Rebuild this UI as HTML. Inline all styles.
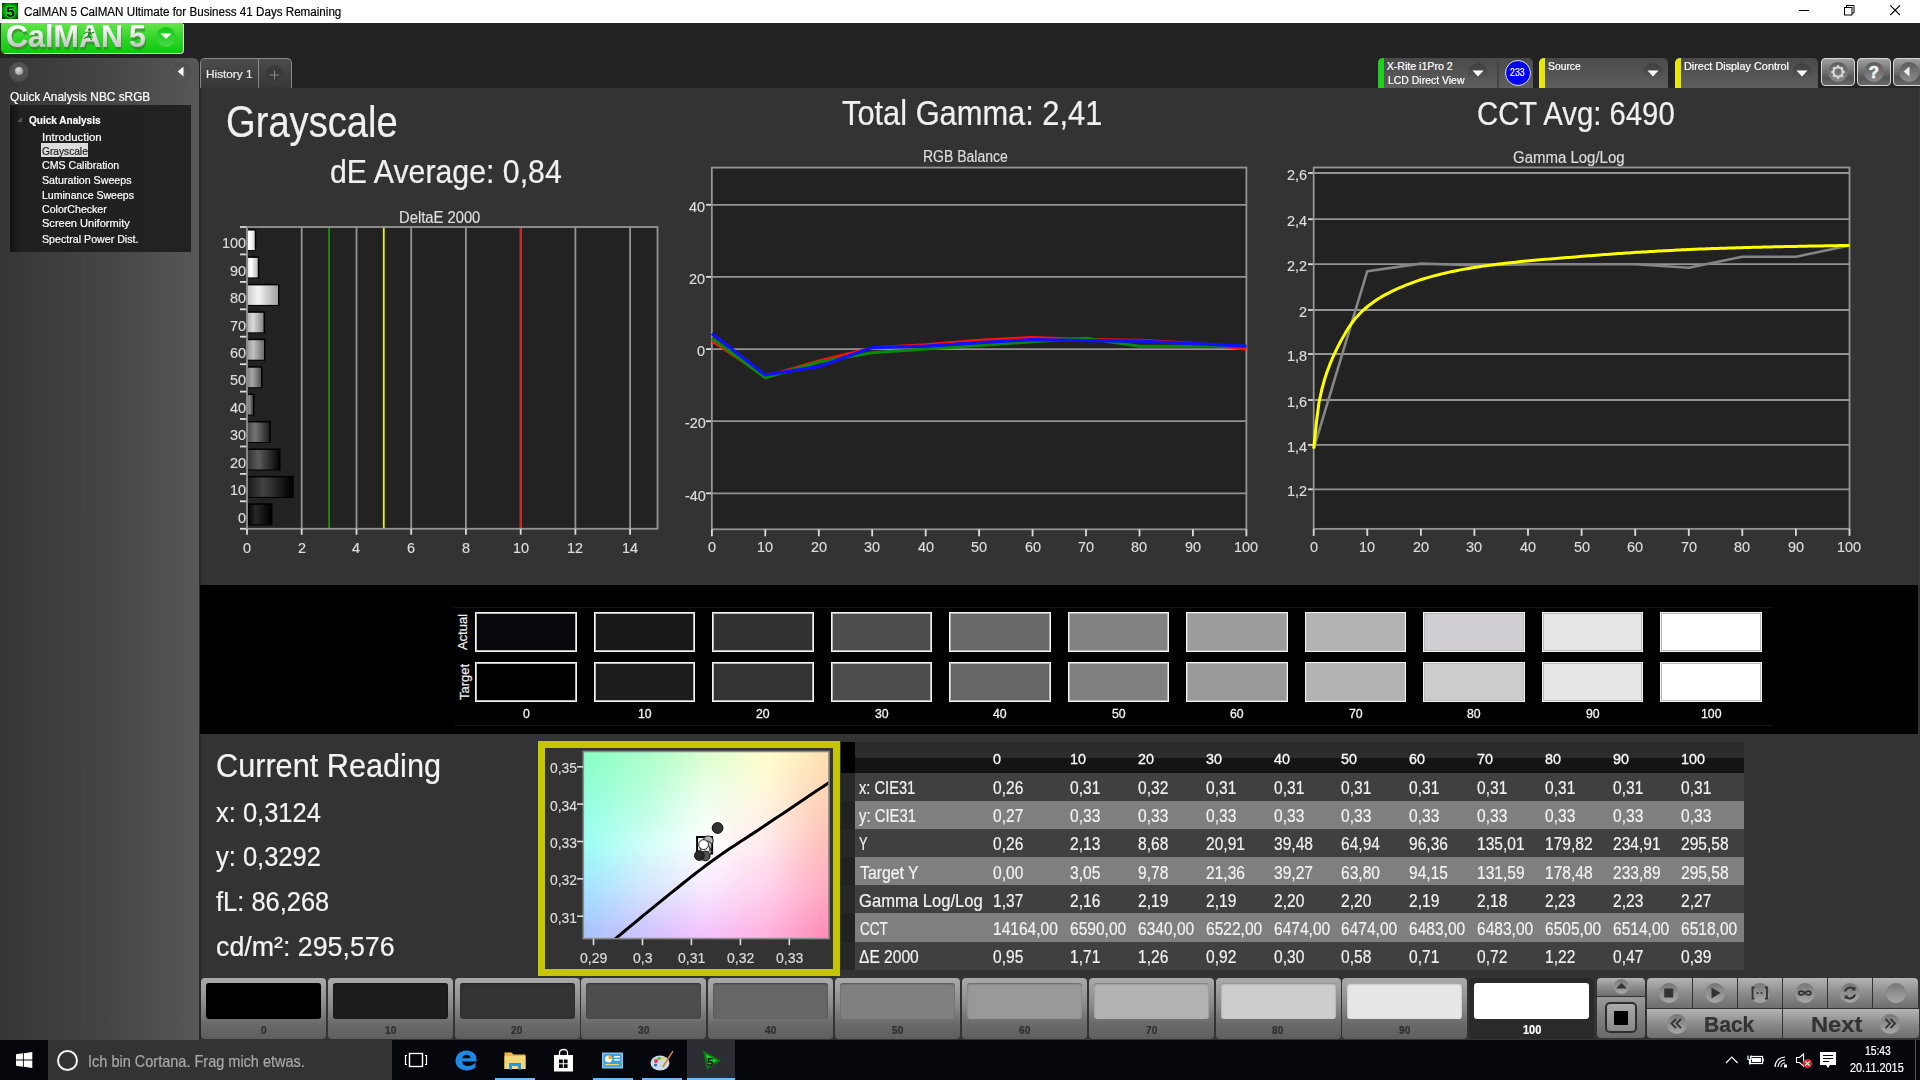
<!DOCTYPE html>
<html><head><meta charset="utf-8">
<style>
*{margin:0;padding:0;box-sizing:border-box}
html,body{width:1920px;height:1080px;overflow:hidden;background:#232323;font-family:"Liberation Sans",sans-serif;color:#eee}
.a{position:absolute}
.t{position:absolute;white-space:nowrap;line-height:1;-webkit-text-stroke:0.2px currentColor}
svg{overflow:visible}
</style></head><body>
<div class="a" style="left:0;top:0;width:1920px;height:23px;background:#fff"></div>
<div class="a" style="left:2px;top:3px;width:16px;height:16px;background:radial-gradient(circle,#1c1 0,#0a0 55%,#020 100%)"></div>
<div class="t" style="left:5.50px;top:4.00px;font-size:15.26px;color:#000;font-weight:bold;transform:scaleX(1.0531);transform-origin:0 0;-webkit-text-stroke:1px #3f3;paint-order:stroke fill;">5</div>
<div class="t" style="left:23.50px;top:6.00px;font-size:12.65px;color:#000;transform:scaleX(0.9200);transform-origin:0 0;">CalMAN 5 CalMAN Ultimate for Business 41 Days Remaining</div>
<svg class="a" style="left:1780px;top:0" width="140" height="23">
    <line x1="19" y1="10.5" x2="29" y2="10.5" stroke="#000" stroke-width="1"/>
    <rect x="64.5" y="7.5" width="7.5" height="7.5" fill="none" stroke="#000"/>
    <path d="M66.5 7.5V5.5H74V13H72" fill="none" stroke="#000"/>
    <path d="M110.3 5.3L120 15M120 5.3L110.3 15" stroke="#000" stroke-width="1.1"/>
    </svg>
<div class="a" style="left:1px;top:23px;width:182px;height:30px;background:linear-gradient(#66e54c,#2fd62a 50%,#0fc80c);border-radius:0 0 4px 4px;box-shadow:1px 1px 0 #ddd"></div>
<div class="t" style="left:6.00px;top:21.00px;font-size:31.25px;color:#3a7a30;font-weight:bold;transform:scaleX(0.9775);transform-origin:0 0;left:7px;top:24px;opacity:.6">CalMAN</div>
<div class="t" style="left:129.00px;top:21.00px;font-size:31.25px;color:#3a7a30;font-weight:bold;transform:scaleX(0.9714);transform-origin:0 0;left:130px;top:24px;opacity:.6">5</div>
<div class="t" style="left:6.00px;top:21.00px;font-size:31.25px;color:transparent;font-weight:bold;transform:scaleX(0.9775);transform-origin:0 0;background:linear-gradient(180deg,#fff 20%,#d8d8d8 60%,#b8b8b8);-webkit-background-clip:text;background-clip:text;">CalMAN</div>
<div class="t" style="left:129.00px;top:21.00px;font-size:31.25px;color:transparent;font-weight:bold;transform:scaleX(0.9714);transform-origin:0 0;background:linear-gradient(180deg,#fff 20%,#d8d8d8 60%,#b8b8b8);-webkit-background-clip:text;background-clip:text;">5</div>
<svg class="a" style="left:0;top:0" width="200" height="60"><circle cx="89.4" cy="29.6" r="1.3" fill="#187a18"/><path d="M84.6 33.6Q86.5 31.6 89 32.2L90.8 33.4 93.8 32.2M89 32.2L88.6 35.4Q86.8 37.6 84.4 38.3M88.6 35.4Q91 36.6 91.3 39.6" fill="none" stroke="#187a18" stroke-width="1.1" stroke-linecap="round"/></svg>
<div class="a" style="left:156px;top:27px;width:20px;height:20px;border-radius:50%;background:linear-gradient(#14c814,#4ad84a)"></div>
<svg class="a" style="left:160px;top:33px" width="12" height="8"><path d="M0.5 0.5H11.5L6 6z" fill="#fff"/></svg>
<div class="a" style="left:0;top:58px;width:199px;height:982px;background:linear-gradient(90deg,#363636,#444 50%,#575757);border-radius:0 6px 0 0"></div>
<div class="a" style="left:199px;top:88px;width:2px;height:952px;background:#2c2c2c"></div>
<div class="a" style="left:9px;top:62px;width:20px;height:20px;border-radius:50%;background:radial-gradient(circle at 50% 40%,#5c5c5c,#444)"></div>
<div class="a" style="left:14.5px;top:66.5px;width:8px;height:8px;border-radius:50%;background:radial-gradient(circle at 40% 35%,#e0e0e0,#808080)"></div>
<div class="a" style="left:171px;top:62px;width:20px;height:20px;border-radius:50%;background:radial-gradient(circle at 50% 60%,#5a5a5a,#474747)"></div>
<svg class="a" style="left:177px;top:66px" width="8" height="12"><path d="M6.5 0.5V10.5L0.8 5.5z" fill="#fff"/></svg>
<div class="t" style="left:9.50px;top:91.00px;font-size:12.06px;color:#fff;transform:scaleX(0.9836);transform-origin:0 0;">Quick Analysis NBC sRGB</div>
<div class="a" style="left:10px;top:105px;width:181px;height:147px;background:linear-gradient(90deg,#121212,#202020 6%,#222)"></div>
<svg class="a" style="left:17px;top:117px" width="6" height="6"><path d="M5 0V5H0z" fill="#555"/></svg>
<div class="t" style="left:29.20px;top:115.00px;font-size:11.26px;color:#fff;font-weight:bold;transform:scaleX(0.8915);transform-origin:0 0;">Quick Analysis</div>
<div class="a" style="left:40.75px;top:143px;width:47.5px;height:14px;background:#dcdcdc"></div>
<div class="t" style="left:42.20px;top:132.00px;font-size:10.76px;color:#fff;transform:scaleX(1.0631);transform-origin:0 0;">Introduction</div>
<div class="t" style="left:42.20px;top:146.00px;font-size:10.76px;color:#222;transform:scaleX(0.9463);transform-origin:0 0;">Grayscale</div>
<div class="t" style="left:42.20px;top:160.00px;font-size:10.76px;color:#fff;transform:scaleX(0.9872);transform-origin:0 0;">CMS Calibration</div>
<div class="t" style="left:42.20px;top:175.00px;font-size:10.76px;color:#fff;transform:scaleX(0.9923);transform-origin:0 0;">Saturation Sweeps</div>
<div class="t" style="left:42.20px;top:190.00px;font-size:10.76px;color:#fff;transform:scaleX(0.9803);transform-origin:0 0;">Luminance Sweeps</div>
<div class="t" style="left:42.20px;top:204.00px;font-size:10.76px;color:#fff;transform:scaleX(0.9860);transform-origin:0 0;">ColorChecker</div>
<div class="t" style="left:42.20px;top:218.00px;font-size:10.76px;color:#fff;transform:scaleX(1.0268);transform-origin:0 0;">Screen Uniformity</div>
<div class="t" style="left:42.20px;top:234.00px;font-size:10.76px;color:#fff;transform:scaleX(0.9908);transform-origin:0 0;">Spectral Power Dist.</div>
<div class="a" style="left:200px;top:58px;width:92px;height:31px;background:linear-gradient(#4c4c4c,#363636);border:1px solid #888;border-bottom:none;border-radius:5px 5px 0 0"></div>
<div class="a" style="left:258px;top:59px;width:1px;height:29px;background:#888"></div>
<div class="t" style="left:206.30px;top:69.00px;font-size:10.90px;color:#eee;transform:scaleX(1.0822);transform-origin:0 0;">History 1</div>
<div class="a" style="left:265px;top:65px;width:19px;height:19px;border-radius:50%;background:radial-gradient(#363636,#3e3e3e)"></div>
<svg class="a" style="left:269px;top:69px" width="12" height="12"><path d="M5.5 1.5V10.5M1 6H10" stroke="#8a8a8a" stroke-width="1"/></svg>
<div class="a" style="left:1378px;top:58px;width:155px;height:30px;background:linear-gradient(#4a4a4a,#5e5e5e);border-radius:5px 5px 0 0;overflow:hidden"><div class="a" style="left:0;top:0;width:6px;height:30px;background:#1ed01e"></div></div>
<div class="a" style="left:1497px;top:62px;width:2px;height:26px;background:#444"></div>
<div class="t" style="left:1386.70px;top:61.00px;font-size:10.61px;color:#fff;">X-Rite i1Pro 2</div>
<div class="t" style="left:1387.50px;top:75.00px;font-size:10.76px;color:#fff;transform:scaleX(0.9716);transform-origin:0 0;">LCD Direct View</div>
<div class="a" style="left:1467.5px;top:62.8px;width:20px;height:20px;border-radius:50%;background:linear-gradient(#3e3e3e,#5e5e5e)"></div><svg class="a" style="left:1471.5px;top:69.8px" width="12" height="8"><path d="M0.5 0.5H11.5L6 6.5z" fill="#fff"/></svg>
<div class="a" style="left:1504.5px;top:59.8px;width:26px;height:26px;border-radius:50%;background:#0000f0;border:1px solid #ddd"></div>
<div class="t" style="left:1510.20px;top:68.00px;font-size:10.03px;color:#fff;transform:scaleX(0.8837);transform-origin:0 0;">233</div>
<div class="a" style="left:1539px;top:58px;width:129px;height:30px;background:linear-gradient(#4a4a4a,#5e5e5e);border-radius:5px 5px 0 0;overflow:hidden"><div class="a" style="left:0;top:0;width:6px;height:30px;background:#e8e800"></div></div>
<div class="t" style="left:1547.50px;top:61.00px;font-size:10.61px;color:#fff;transform:scaleX(0.9752);transform-origin:0 0;">Source</div>
<div class="a" style="left:1642.5px;top:62.8px;width:20px;height:20px;border-radius:50%;background:linear-gradient(#3e3e3e,#5e5e5e)"></div><svg class="a" style="left:1646.5px;top:69.8px" width="12" height="8"><path d="M0.5 0.5H11.5L6 6.5z" fill="#fff"/></svg>
<div class="a" style="left:1675px;top:58px;width:143px;height:30px;background:linear-gradient(#4a4a4a,#5e5e5e);border-radius:5px 5px 0 0;overflow:hidden"><div class="a" style="left:0;top:0;width:6px;height:30px;background:#e8e800"></div></div>
<div class="t" style="left:1683.70px;top:61.00px;font-size:10.61px;color:#fff;transform:scaleX(1.0238);transform-origin:0 0;">Direct Display Control</div>
<div class="a" style="left:1791.8px;top:62.8px;width:20px;height:20px;border-radius:50%;background:linear-gradient(#3e3e3e,#5e5e5e)"></div><svg class="a" style="left:1795.8px;top:69.8px" width="12" height="8"><path d="M0.5 0.5H11.5L6 6.5z" fill="#fff"/></svg>
<div class="a" style="left:1821px;top:58px;width:34px;height:28px;background:linear-gradient(#a0a0a0,#6e6e6e 50%,#555 72%,#686868);border:1px solid #d8d8d8;border-radius:4px"></div><div class="a" style="left:1828.0px;top:61.5px;width:20px;height:20px;border-radius:50%;background:linear-gradient(#5a5a5a,#8c8c8c)"></div><svg class="a" style="left:1830px;top:63.5px" width="16" height="16" viewBox="0 0 16 16"><circle cx="8" cy="8" r="4.6" fill="none" stroke="#d8d8d8" stroke-width="2.2"/><g stroke="#d8d8d8" stroke-width="2.2"><line x1="8" y1="1.2" x2="8" y2="3.5"/><line x1="8" y1="12.5" x2="8" y2="14.8"/><line x1="1.2" y1="8" x2="3.5" y2="8"/><line x1="12.5" y1="8" x2="14.8" y2="8"/><line x1="3.2" y1="3.2" x2="4.8" y2="4.8"/><line x1="11.2" y1="11.2" x2="12.8" y2="12.8"/><line x1="3.2" y1="12.8" x2="4.8" y2="11.2"/><line x1="11.2" y1="4.8" x2="12.8" y2="3.2"/></g></svg>
<div class="a" style="left:1857px;top:58px;width:34px;height:28px;background:linear-gradient(#a0a0a0,#6e6e6e 50%,#555 72%,#686868);border:1px solid #d8d8d8;border-radius:4px"></div><div class="a" style="left:1864.0px;top:61.5px;width:20px;height:20px;border-radius:50%;background:linear-gradient(#5a5a5a,#8c8c8c)"></div>
<div class="t" style="left:1868.70px;top:65.00px;font-size:16.72px;color:#f2f2f2;font-weight:bold;-webkit-text-stroke:0.6px #f2f2f2;">?</div>
<div class="a" style="left:1893px;top:58px;width:32px;height:28px;background:linear-gradient(#a0a0a0,#6e6e6e 50%,#555 72%,#686868);border:1px solid #d8d8d8;border-radius:4px"></div><div class="a" style="left:1899.0px;top:61.5px;width:20px;height:20px;border-radius:50%;background:linear-gradient(#5a5a5a,#8c8c8c)"></div>
<svg class="a" style="left:1902px;top:66px" width="9" height="12"><path d="M7.5 0.5V10.5L1.5 5.5z" fill="#eee"/></svg>
<div class="a" style="left:200px;top:88px;width:1720px;height:497px;background:#333"></div>
<div class="a" style="left:1919px;top:88px;width:1px;height:497px;background:#3c3c3c"></div>
<div class="a" style="left:199px;top:88px;width:2px;height:497px;background:#272727"></div>
<svg class="a" style="left:0;top:0" width="1920" height="1080"><rect x="247" y="227" width="410.5" height="301.75" fill="#222"/><line x1="301.7" y1="227" x2="301.7" y2="528.75" stroke="#949494" stroke-width="1.8"/><line x1="356.5" y1="227" x2="356.5" y2="528.75" stroke="#949494" stroke-width="1.8"/><line x1="411.2" y1="227" x2="411.2" y2="528.75" stroke="#949494" stroke-width="1.8"/><line x1="465.9" y1="227" x2="465.9" y2="528.75" stroke="#949494" stroke-width="1.8"/><line x1="520.7" y1="227" x2="520.7" y2="528.75" stroke="#949494" stroke-width="1.8"/><line x1="575.4" y1="227" x2="575.4" y2="528.75" stroke="#949494" stroke-width="1.8"/><line x1="630.1" y1="227" x2="630.1" y2="528.75" stroke="#949494" stroke-width="1.8"/><line x1="329.1" y1="227" x2="329.1" y2="528.75" stroke="#1c8c1c" stroke-width="1.8"/><line x1="383.8" y1="227" x2="383.8" y2="528.75" stroke="#f0f000" stroke-width="1.8"/><line x1="520.7" y1="227" x2="520.7" y2="528.75" stroke="#e01818" stroke-width="1.8"/><defs><linearGradient id="bg0" x1="0" x2="1" y1="0" y2="0"><stop offset="0" stop-color="rgb(0,0,0)"/><stop offset="0.35" stop-color="rgb(40,40,40)"/><stop offset="1" stop-color="rgb(0,0,0)"/></linearGradient><linearGradient id="bg10" x1="0" x2="1" y1="0" y2="0"><stop offset="0" stop-color="rgb(26,26,26)"/><stop offset="0.35" stop-color="rgb(66,66,66)"/><stop offset="1" stop-color="rgb(0,0,0)"/></linearGradient><linearGradient id="bg20" x1="0" x2="1" y1="0" y2="0"><stop offset="0" stop-color="rgb(51,51,51)"/><stop offset="0.35" stop-color="rgb(91,91,91)"/><stop offset="1" stop-color="rgb(6,6,6)"/></linearGradient><linearGradient id="bg30" x1="0" x2="1" y1="0" y2="0"><stop offset="0" stop-color="rgb(76,76,76)"/><stop offset="0.35" stop-color="rgb(116,116,116)"/><stop offset="1" stop-color="rgb(31,31,31)"/></linearGradient><linearGradient id="bg40" x1="0" x2="1" y1="0" y2="0"><stop offset="0" stop-color="rgb(102,102,102)"/><stop offset="0.35" stop-color="rgb(142,142,142)"/><stop offset="1" stop-color="rgb(57,57,57)"/></linearGradient><linearGradient id="bg50" x1="0" x2="1" y1="0" y2="0"><stop offset="0" stop-color="rgb(127,127,127)"/><stop offset="0.35" stop-color="rgb(167,167,167)"/><stop offset="1" stop-color="rgb(82,82,82)"/></linearGradient><linearGradient id="bg60" x1="0" x2="1" y1="0" y2="0"><stop offset="0" stop-color="rgb(153,153,153)"/><stop offset="0.35" stop-color="rgb(193,193,193)"/><stop offset="1" stop-color="rgb(108,108,108)"/></linearGradient><linearGradient id="bg70" x1="0" x2="1" y1="0" y2="0"><stop offset="0" stop-color="rgb(178,178,178)"/><stop offset="0.35" stop-color="rgb(218,218,218)"/><stop offset="1" stop-color="rgb(133,133,133)"/></linearGradient><linearGradient id="bg80" x1="0" x2="1" y1="0" y2="0"><stop offset="0" stop-color="rgb(204,204,204)"/><stop offset="0.35" stop-color="rgb(244,244,244)"/><stop offset="1" stop-color="rgb(159,159,159)"/></linearGradient><linearGradient id="bg90" x1="0" x2="1" y1="0" y2="0"><stop offset="0" stop-color="rgb(229,229,229)"/><stop offset="0.35" stop-color="rgb(255,255,255)"/><stop offset="1" stop-color="rgb(184,184,184)"/></linearGradient><linearGradient id="bg100" x1="0" x2="1" y1="0" y2="0"><stop offset="0" stop-color="rgb(255,255,255)"/><stop offset="0.35" stop-color="rgb(255,255,255)"/><stop offset="1" stop-color="rgb(210,210,210)"/></linearGradient></defs><rect x="247" y="229.0" width="9.25" height="22" fill="#000"/><rect x="247.5" y="230.5" width="7.25" height="19.5" fill="url(#bg100)"/><line x1="240" y1="227.0" x2="247" y2="227.0" stroke="#ddd" stroke-width="1.8"/><rect x="247" y="256.4" width="12.25" height="22" fill="#000"/><rect x="247.5" y="257.9" width="10.25" height="19.5" fill="url(#bg90)"/><line x1="240" y1="254.4" x2="247" y2="254.4" stroke="#ddd" stroke-width="1.8"/><rect x="247" y="283.9" width="32.50" height="22" fill="#000"/><rect x="247.5" y="285.4" width="30.50" height="19.5" fill="url(#bg80)"/><line x1="240" y1="281.9" x2="247" y2="281.9" stroke="#ddd" stroke-width="1.8"/><rect x="247" y="311.3" width="18.00" height="22" fill="#000"/><rect x="247.5" y="312.8" width="16.00" height="19.5" fill="url(#bg70)"/><line x1="240" y1="309.3" x2="247" y2="309.3" stroke="#ddd" stroke-width="1.8"/><rect x="247" y="338.7" width="18.50" height="22" fill="#000"/><rect x="247.5" y="340.2" width="16.50" height="19.5" fill="url(#bg60)"/><line x1="240" y1="336.7" x2="247" y2="336.7" stroke="#ddd" stroke-width="1.8"/><rect x="247" y="366.2" width="15.50" height="22" fill="#000"/><rect x="247.5" y="367.7" width="13.50" height="19.5" fill="url(#bg50)"/><line x1="240" y1="364.2" x2="247" y2="364.2" stroke="#ddd" stroke-width="1.8"/><rect x="247" y="393.6" width="7.50" height="22" fill="#000"/><rect x="247.5" y="395.1" width="5.50" height="19.5" fill="url(#bg40)"/><line x1="240" y1="391.6" x2="247" y2="391.6" stroke="#ddd" stroke-width="1.8"/><rect x="247" y="421.0" width="23.75" height="22" fill="#000"/><rect x="247.5" y="422.5" width="21.75" height="19.5" fill="url(#bg30)"/><line x1="240" y1="419.0" x2="247" y2="419.0" stroke="#ddd" stroke-width="1.8"/><rect x="247" y="448.5" width="33.50" height="22" fill="#000"/><rect x="247.5" y="450.0" width="31.50" height="19.5" fill="url(#bg20)"/><line x1="240" y1="446.5" x2="247" y2="446.5" stroke="#ddd" stroke-width="1.8"/><rect x="247" y="475.9" width="46.75" height="22" fill="#000"/><rect x="247.5" y="477.4" width="44.75" height="19.5" fill="url(#bg10)"/><line x1="240" y1="473.9" x2="247" y2="473.9" stroke="#ddd" stroke-width="1.8"/><rect x="247" y="503.3" width="25.50" height="22" fill="#000"/><rect x="247.5" y="504.8" width="23.50" height="19.5" fill="url(#bg0)"/><line x1="240" y1="501.3" x2="247" y2="501.3" stroke="#ddd" stroke-width="1.8"/><line x1="240" y1="528.75" x2="247" y2="528.75" stroke="#ddd" stroke-width="1.8"/><rect x="247" y="227" width="410.5" height="301.75" fill="none" stroke="#949494" stroke-width="1.8"/><line x1="247.0" y1="528.75" x2="247.0" y2="534.75" stroke="#ddd" stroke-width="1.8"/><line x1="301.7" y1="528.75" x2="301.7" y2="534.75" stroke="#ddd" stroke-width="1.8"/><line x1="356.5" y1="528.75" x2="356.5" y2="534.75" stroke="#ddd" stroke-width="1.8"/><line x1="411.2" y1="528.75" x2="411.2" y2="534.75" stroke="#ddd" stroke-width="1.8"/><line x1="465.9" y1="528.75" x2="465.9" y2="534.75" stroke="#ddd" stroke-width="1.8"/><line x1="520.7" y1="528.75" x2="520.7" y2="534.75" stroke="#ddd" stroke-width="1.8"/><line x1="575.4" y1="528.75" x2="575.4" y2="534.75" stroke="#ddd" stroke-width="1.8"/><line x1="630.1" y1="528.75" x2="630.1" y2="534.75" stroke="#ddd" stroke-width="1.8"/><rect x="711.85" y="167.6" width="534.5500000000001" height="361.69999999999993" fill="#222"/><line x1="711.85" y1="204.8" x2="1246.4" y2="204.8" stroke="#949494" stroke-width="1.8"/><line x1="706" y1="204.8" x2="711.85" y2="204.8" stroke="#ddd" stroke-width="1.8"/><line x1="711.85" y1="276.9" x2="1246.4" y2="276.9" stroke="#949494" stroke-width="1.8"/><line x1="706" y1="276.9" x2="711.85" y2="276.9" stroke="#ddd" stroke-width="1.8"/><line x1="711.85" y1="349.1" x2="1246.4" y2="349.1" stroke="#949494" stroke-width="1.8"/><line x1="706" y1="349.1" x2="711.85" y2="349.1" stroke="#ddd" stroke-width="1.8"/><line x1="711.85" y1="421.2" x2="1246.4" y2="421.2" stroke="#949494" stroke-width="1.8"/><line x1="706" y1="421.2" x2="711.85" y2="421.2" stroke="#ddd" stroke-width="1.8"/><line x1="711.85" y1="493.3" x2="1246.4" y2="493.3" stroke="#949494" stroke-width="1.8"/><line x1="706" y1="493.3" x2="711.85" y2="493.3" stroke="#ddd" stroke-width="1.8"/><rect x="711.85" y="167.6" width="534.5500000000001" height="361.69999999999993" fill="none" stroke="#949494" stroke-width="1.8"/><line x1="711.9" y1="529.3" x2="711.9" y2="536.3" stroke="#ddd" stroke-width="1.8"/><line x1="765.3" y1="529.3" x2="765.3" y2="536.3" stroke="#ddd" stroke-width="1.8"/><line x1="818.8" y1="529.3" x2="818.8" y2="536.3" stroke="#ddd" stroke-width="1.8"/><line x1="872.2" y1="529.3" x2="872.2" y2="536.3" stroke="#ddd" stroke-width="1.8"/><line x1="925.7" y1="529.3" x2="925.7" y2="536.3" stroke="#ddd" stroke-width="1.8"/><line x1="979.1" y1="529.3" x2="979.1" y2="536.3" stroke="#ddd" stroke-width="1.8"/><line x1="1032.6" y1="529.3" x2="1032.6" y2="536.3" stroke="#ddd" stroke-width="1.8"/><line x1="1086.0" y1="529.3" x2="1086.0" y2="536.3" stroke="#ddd" stroke-width="1.8"/><line x1="1139.5" y1="529.3" x2="1139.5" y2="536.3" stroke="#ddd" stroke-width="1.8"/><line x1="1192.9" y1="529.3" x2="1192.9" y2="536.3" stroke="#ddd" stroke-width="1.8"/><line x1="1246.4" y1="529.3" x2="1246.4" y2="536.3" stroke="#ddd" stroke-width="1.8"/><polyline points="711.9,341.1 765.3,376.5 818.8,360.6 872.2,347.6 925.7,344.4 979.1,340.0 1032.6,337.2 1086.0,339.3 1139.5,340.0 1192.9,342.9 1246.4,349.4" fill="none" stroke="#ff1010" stroke-width="2.5" stroke-linejoin="round"/><polyline points="711.9,338.2 765.3,377.9 818.8,362.0 872.2,352.7 925.7,349.1 979.1,345.4 1032.6,341.8 1086.0,338.2 1139.5,346.2 1192.9,346.2 1246.4,346.2" fill="none" stroke="#0a8a0a" stroke-width="3" stroke-linejoin="round"/><polyline points="711.9,333.5 765.3,375.0 818.8,366.7 872.2,347.6 925.7,346.2 979.1,342.6 1032.6,339.7 1086.0,340.6 1139.5,341.1 1192.9,343.6 1246.4,346.2" fill="none" stroke="#1010ff" stroke-width="3.2" stroke-linejoin="round"/><rect x="1313.7" y="167.5" width="535.8" height="361.35" fill="#222"/><line x1="1313.7" y1="489.3" x2="1849.5" y2="489.3" stroke="#949494" stroke-width="1.8"/><line x1="1308" y1="489.3" x2="1313.7" y2="489.3" stroke="#ddd" stroke-width="1.8"/><line x1="1313.7" y1="444.9" x2="1849.5" y2="444.9" stroke="#949494" stroke-width="1.8"/><line x1="1308" y1="444.9" x2="1313.7" y2="444.9" stroke="#ddd" stroke-width="1.8"/><line x1="1313.7" y1="400.0" x2="1849.5" y2="400.0" stroke="#949494" stroke-width="1.8"/><line x1="1308" y1="400.0" x2="1313.7" y2="400.0" stroke="#ddd" stroke-width="1.8"/><line x1="1313.7" y1="354.0" x2="1849.5" y2="354.0" stroke="#949494" stroke-width="1.8"/><line x1="1308" y1="354.0" x2="1313.7" y2="354.0" stroke="#ddd" stroke-width="1.8"/><line x1="1313.7" y1="310.0" x2="1849.5" y2="310.0" stroke="#949494" stroke-width="1.8"/><line x1="1308" y1="310.0" x2="1313.7" y2="310.0" stroke="#ddd" stroke-width="1.8"/><line x1="1313.7" y1="264.2" x2="1849.5" y2="264.2" stroke="#949494" stroke-width="1.8"/><line x1="1308" y1="264.2" x2="1313.7" y2="264.2" stroke="#ddd" stroke-width="1.8"/><line x1="1313.7" y1="219.2" x2="1849.5" y2="219.2" stroke="#949494" stroke-width="1.8"/><line x1="1308" y1="219.2" x2="1313.7" y2="219.2" stroke="#ddd" stroke-width="1.8"/><line x1="1313.7" y1="173.0" x2="1849.5" y2="173.0" stroke="#949494" stroke-width="1.8"/><line x1="1308" y1="173.0" x2="1313.7" y2="173.0" stroke="#ddd" stroke-width="1.8"/><rect x="1313.7" y="167.5" width="535.8" height="361.35" fill="none" stroke="#949494" stroke-width="1.8"/><line x1="1313.7" y1="528.85" x2="1313.7" y2="535.85" stroke="#ddd" stroke-width="1.8"/><line x1="1367.3" y1="528.85" x2="1367.3" y2="535.85" stroke="#ddd" stroke-width="1.8"/><line x1="1420.9" y1="528.85" x2="1420.9" y2="535.85" stroke="#ddd" stroke-width="1.8"/><line x1="1474.4" y1="528.85" x2="1474.4" y2="535.85" stroke="#ddd" stroke-width="1.8"/><line x1="1528.0" y1="528.85" x2="1528.0" y2="535.85" stroke="#ddd" stroke-width="1.8"/><line x1="1581.6" y1="528.85" x2="1581.6" y2="535.85" stroke="#ddd" stroke-width="1.8"/><line x1="1635.2" y1="528.85" x2="1635.2" y2="535.85" stroke="#ddd" stroke-width="1.8"/><line x1="1688.8" y1="528.85" x2="1688.8" y2="535.85" stroke="#ddd" stroke-width="1.8"/><line x1="1742.3" y1="528.85" x2="1742.3" y2="535.85" stroke="#ddd" stroke-width="1.8"/><line x1="1795.9" y1="528.85" x2="1795.9" y2="535.85" stroke="#ddd" stroke-width="1.8"/><line x1="1849.5" y1="528.85" x2="1849.5" y2="535.85" stroke="#ddd" stroke-width="1.8"/><polyline points="1313.7,448.5 1367.3,271.2 1420.9,263.6 1474.4,265.3 1528.0,264.3 1581.6,264.3 1635.2,264.3 1688.8,267.7 1742.3,256.7 1795.9,256.7 1849.5,245.4" fill="none" stroke="#858585" stroke-width="2.6" stroke-linejoin="round"/><polyline points="1313.70,448.60 1316.39,422.93 1318.79,403.90 1319.08,402.23 1321.78,389.58 1324.42,380.00 1324.47,379.82 1327.16,371.53 1329.85,364.44 1330.85,362.00 1332.55,357.97 1335.24,352.04 1337.93,346.58 1339.42,343.75 1340.62,341.51 1343.32,336.62 1346.01,331.95 1348.70,327.58 1351.39,323.60 1353.35,321.00 1354.09,320.08 1356.78,316.89 1359.47,313.94 1362.16,311.24 1364.86,308.77 1366.96,307.00 1367.55,306.52 1370.24,304.42 1372.93,302.44 1375.63,300.58 1378.32,298.82 1381.01,297.17 1383.70,295.62 1386.40,294.17 1387.10,293.80 1389.09,292.79 1391.78,291.46 1394.47,290.17 1397.17,288.93 1399.86,287.72 1402.55,286.56 1405.24,285.43 1407.94,284.35 1410.63,283.31 1413.32,282.31 1416.01,281.35 1418.71,280.43 1421.40,279.55 1424.09,278.72 1425.15,278.40 1426.78,277.92 1429.48,277.15 1432.17,276.40 1434.86,275.67 1437.55,274.97 1440.25,274.29 1442.94,273.63 1445.63,272.99 1448.32,272.38 1451.02,271.78 1453.71,271.21 1456.40,270.66 1459.09,270.13 1461.79,269.62 1464.48,269.14 1466.40,268.80 1467.17,268.67 1469.86,268.22 1472.56,267.78 1475.25,267.35 1477.94,266.93 1480.63,266.53 1483.33,266.14 1486.02,265.75 1488.71,265.38 1491.40,265.02 1494.09,264.67 1496.79,264.32 1499.48,263.99 1502.17,263.66 1504.86,263.34 1507.56,263.03 1510.25,262.73 1512.94,262.43 1515.63,262.14 1517.84,261.90 1518.33,261.85 1521.02,261.57 1523.71,261.30 1526.40,261.03 1529.10,260.78 1531.79,260.52 1534.48,260.28 1537.17,260.04 1539.87,259.80 1542.56,259.57 1545.25,259.35 1547.94,259.12 1550.64,258.90 1553.33,258.68 1556.02,258.46 1558.71,258.25 1561.41,258.03 1564.10,257.82 1566.79,257.60 1569.28,257.40 1569.48,257.38 1572.18,257.17 1574.87,256.95 1577.56,256.73 1580.25,256.51 1582.95,256.30 1585.64,256.08 1588.33,255.87 1591.02,255.65 1593.72,255.44 1596.41,255.23 1599.10,255.02 1601.79,254.81 1604.49,254.60 1607.18,254.40 1609.87,254.20 1612.56,254.00 1615.26,253.81 1617.95,253.61 1620.64,253.42 1623.33,253.24 1626.03,253.06 1628.72,252.88 1631.41,252.70 1634.10,252.53 1636.80,252.36 1637.86,252.30 1639.49,252.20 1642.18,252.04 1644.87,251.88 1647.57,251.72 1650.26,251.57 1652.95,251.41 1655.64,251.26 1658.34,251.11 1661.03,250.96 1663.72,250.81 1666.41,250.67 1669.11,250.52 1671.80,250.38 1674.49,250.24 1677.18,250.11 1679.87,249.97 1682.57,249.84 1685.26,249.72 1687.95,249.59 1690.64,249.47 1693.34,249.35 1696.03,249.23 1698.72,249.12 1701.41,249.01 1704.11,248.91 1706.80,248.81 1706.98,248.80 1709.49,248.71 1712.18,248.61 1714.88,248.52 1717.57,248.42 1720.26,248.33 1722.95,248.24 1725.65,248.16 1728.34,248.07 1731.03,247.99 1733.72,247.90 1736.42,247.82 1739.11,247.74 1741.80,247.66 1744.49,247.59 1747.19,247.51 1749.88,247.44 1752.57,247.37 1755.26,247.30 1757.96,247.23 1760.65,247.16 1763.34,247.09 1766.03,247.03 1768.73,246.96 1771.42,246.90 1774.11,246.83 1775.56,246.80 1776.80,246.77 1779.50,246.71 1782.19,246.65 1784.88,246.59 1787.57,246.54 1790.27,246.48 1792.96,246.43 1795.65,246.38 1798.34,246.32 1801.04,246.27 1803.73,246.22 1806.42,246.17 1809.11,246.12 1811.81,246.08 1814.50,246.03 1817.19,245.98 1819.88,245.93 1822.58,245.88 1825.27,245.84 1827.96,245.79 1830.65,245.74 1833.35,245.69 1836.04,245.65 1838.73,245.60 1841.42,245.55 1844.12,245.50 1846.81,245.45 1849.50,245.40" fill="none" stroke="#ffff00" stroke-width="3" stroke-linejoin="round"/></svg>
<div class="t" style="left:225.75px;top:100.00px;font-size:44.69px;color:#f0f0f0;transform:scaleX(0.8539);transform-origin:0 0;">Grayscale</div>
<div class="t" style="left:330.00px;top:156.00px;font-size:32.70px;color:#f0f0f0;transform:scaleX(0.9263);transform-origin:0 0;">dE Average: 0,84</div>
<div class="t" style="left:398.75px;top:210.00px;font-size:15.63px;color:#dcdcdc;transform:scaleX(0.9455);transform-origin:0 0;">DeltaE 2000</div>
<div class="t" style="left:841.60px;top:96.00px;font-size:34.16px;color:#f0f0f0;transform:scaleX(0.9022);transform-origin:0 0;">Total Gamma: 2,41</div>
<div class="t" style="left:923.00px;top:149.00px;font-size:15.84px;color:#dcdcdc;transform:scaleX(0.8833);transform-origin:0 0;">RGB Balance</div>
<div class="t" style="left:1476.60px;top:98.00px;font-size:32.56px;color:#f0f0f0;transform:scaleX(0.9005);transform-origin:0 0;">CCT Avg: 6490</div>
<div class="t" style="left:1512.70px;top:150.00px;font-size:15.84px;color:#dcdcdc;transform:scaleX(0.9464);transform-origin:0 0;">Gamma Log/Log</div>
<div class="t" style="left:221.65px;top:235.00px;font-size:15.55px;color:#dcdcdc;transform:scaleX(0.9300);transform-origin:0 0;">100</div>
<div class="t" style="left:229.75px;top:263.00px;font-size:15.55px;color:#dcdcdc;transform:scaleX(0.9300);transform-origin:0 0;">90</div>
<div class="t" style="left:229.75px;top:290.00px;font-size:15.55px;color:#dcdcdc;transform:scaleX(0.9300);transform-origin:0 0;">80</div>
<div class="t" style="left:229.75px;top:318.00px;font-size:15.55px;color:#dcdcdc;transform:scaleX(0.9300);transform-origin:0 0;">70</div>
<div class="t" style="left:229.75px;top:345.00px;font-size:15.55px;color:#dcdcdc;transform:scaleX(0.9300);transform-origin:0 0;">60</div>
<div class="t" style="left:229.75px;top:372.00px;font-size:15.55px;color:#dcdcdc;transform:scaleX(0.9300);transform-origin:0 0;">50</div>
<div class="t" style="left:229.75px;top:400.00px;font-size:15.55px;color:#dcdcdc;transform:scaleX(0.9300);transform-origin:0 0;">40</div>
<div class="t" style="left:229.75px;top:427.00px;font-size:15.55px;color:#dcdcdc;transform:scaleX(0.9300);transform-origin:0 0;">30</div>
<div class="t" style="left:229.75px;top:455.00px;font-size:15.55px;color:#dcdcdc;transform:scaleX(0.9300);transform-origin:0 0;">20</div>
<div class="t" style="left:229.75px;top:482.00px;font-size:15.55px;color:#dcdcdc;transform:scaleX(0.9300);transform-origin:0 0;">10</div>
<div class="t" style="left:237.70px;top:510.00px;font-size:15.55px;color:#dcdcdc;transform:scaleX(0.9300);transform-origin:0 0;">0</div>
<div class="t" style="left:242.95px;top:540.00px;font-size:15.55px;color:#dcdcdc;transform:scaleX(0.9300);transform-origin:0 0;">0</div>
<div class="t" style="left:297.68px;top:540.00px;font-size:15.55px;color:#dcdcdc;transform:scaleX(0.9300);transform-origin:0 0;">2</div>
<div class="t" style="left:352.42px;top:540.00px;font-size:15.55px;color:#dcdcdc;transform:scaleX(0.9300);transform-origin:0 0;">4</div>
<div class="t" style="left:407.15px;top:540.00px;font-size:15.55px;color:#dcdcdc;transform:scaleX(0.9300);transform-origin:0 0;">6</div>
<div class="t" style="left:461.88px;top:540.00px;font-size:15.55px;color:#dcdcdc;transform:scaleX(0.9300);transform-origin:0 0;">8</div>
<div class="t" style="left:512.64px;top:540.00px;font-size:15.55px;color:#dcdcdc;transform:scaleX(0.9300);transform-origin:0 0;">10</div>
<div class="t" style="left:567.37px;top:540.00px;font-size:15.55px;color:#dcdcdc;transform:scaleX(0.9300);transform-origin:0 0;">12</div>
<div class="t" style="left:622.11px;top:540.00px;font-size:15.55px;color:#dcdcdc;transform:scaleX(0.9300);transform-origin:0 0;">14</div>
<div class="t" style="left:689.45px;top:199.00px;font-size:15.55px;color:#dcdcdc;transform:scaleX(0.9300);transform-origin:0 0;">40</div>
<div class="t" style="left:689.45px;top:271.00px;font-size:15.55px;color:#dcdcdc;transform:scaleX(0.9300);transform-origin:0 0;">20</div>
<div class="t" style="left:697.40px;top:343.00px;font-size:15.55px;color:#dcdcdc;transform:scaleX(0.9300);transform-origin:0 0;">0</div>
<div class="t" style="left:684.53px;top:415.00px;font-size:15.55px;color:#dcdcdc;transform:scaleX(0.9300);transform-origin:0 0;">-20</div>
<div class="t" style="left:684.53px;top:488.00px;font-size:15.55px;color:#dcdcdc;transform:scaleX(0.9300);transform-origin:0 0;">-40</div>
<div class="t" style="left:707.80px;top:539.00px;font-size:15.55px;color:#dcdcdc;transform:scaleX(0.9300);transform-origin:0 0;">0</div>
<div class="t" style="left:757.28px;top:539.00px;font-size:15.55px;color:#dcdcdc;transform:scaleX(0.9300);transform-origin:0 0;">10</div>
<div class="t" style="left:810.73px;top:539.00px;font-size:15.55px;color:#dcdcdc;transform:scaleX(0.9300);transform-origin:0 0;">20</div>
<div class="t" style="left:864.19px;top:539.00px;font-size:15.55px;color:#dcdcdc;transform:scaleX(0.9300);transform-origin:0 0;">30</div>
<div class="t" style="left:917.64px;top:539.00px;font-size:15.55px;color:#dcdcdc;transform:scaleX(0.9300);transform-origin:0 0;">40</div>
<div class="t" style="left:971.10px;top:539.00px;font-size:15.55px;color:#dcdcdc;transform:scaleX(0.9300);transform-origin:0 0;">50</div>
<div class="t" style="left:1024.55px;top:539.00px;font-size:15.55px;color:#dcdcdc;transform:scaleX(0.9300);transform-origin:0 0;">60</div>
<div class="t" style="left:1078.01px;top:539.00px;font-size:15.55px;color:#dcdcdc;transform:scaleX(0.9300);transform-origin:0 0;">70</div>
<div class="t" style="left:1131.46px;top:539.00px;font-size:15.55px;color:#dcdcdc;transform:scaleX(0.9300);transform-origin:0 0;">80</div>
<div class="t" style="left:1184.92px;top:539.00px;font-size:15.55px;color:#dcdcdc;transform:scaleX(0.9300);transform-origin:0 0;">90</div>
<div class="t" style="left:1234.32px;top:539.00px;font-size:15.55px;color:#dcdcdc;transform:scaleX(0.9300);transform-origin:0 0;">100</div>
<div class="t" style="left:1286.90px;top:483.00px;font-size:15.55px;color:#dcdcdc;transform:scaleX(0.9300);transform-origin:0 0;">1,2</div>
<div class="t" style="left:1286.90px;top:439.00px;font-size:15.55px;color:#dcdcdc;transform:scaleX(0.9300);transform-origin:0 0;">1,4</div>
<div class="t" style="left:1286.90px;top:394.00px;font-size:15.55px;color:#dcdcdc;transform:scaleX(0.9300);transform-origin:0 0;">1,6</div>
<div class="t" style="left:1286.90px;top:348.00px;font-size:15.55px;color:#dcdcdc;transform:scaleX(0.9300);transform-origin:0 0;">1,8</div>
<div class="t" style="left:1298.90px;top:304.00px;font-size:15.55px;color:#dcdcdc;transform:scaleX(0.9300);transform-origin:0 0;">2</div>
<div class="t" style="left:1286.90px;top:258.00px;font-size:15.55px;color:#dcdcdc;transform:scaleX(0.9300);transform-origin:0 0;">2,2</div>
<div class="t" style="left:1286.90px;top:213.00px;font-size:15.55px;color:#dcdcdc;transform:scaleX(0.9300);transform-origin:0 0;">2,4</div>
<div class="t" style="left:1286.90px;top:167.00px;font-size:15.55px;color:#dcdcdc;transform:scaleX(0.9300);transform-origin:0 0;">2,6</div>
<div class="t" style="left:1309.65px;top:539.00px;font-size:15.55px;color:#dcdcdc;transform:scaleX(0.9300);transform-origin:0 0;">0</div>
<div class="t" style="left:1359.25px;top:539.00px;font-size:15.55px;color:#dcdcdc;transform:scaleX(0.9300);transform-origin:0 0;">10</div>
<div class="t" style="left:1412.83px;top:539.00px;font-size:15.55px;color:#dcdcdc;transform:scaleX(0.9300);transform-origin:0 0;">20</div>
<div class="t" style="left:1466.41px;top:539.00px;font-size:15.55px;color:#dcdcdc;transform:scaleX(0.9300);transform-origin:0 0;">30</div>
<div class="t" style="left:1519.99px;top:539.00px;font-size:15.55px;color:#dcdcdc;transform:scaleX(0.9300);transform-origin:0 0;">40</div>
<div class="t" style="left:1573.57px;top:539.00px;font-size:15.55px;color:#dcdcdc;transform:scaleX(0.9300);transform-origin:0 0;">50</div>
<div class="t" style="left:1627.15px;top:539.00px;font-size:15.55px;color:#dcdcdc;transform:scaleX(0.9300);transform-origin:0 0;">60</div>
<div class="t" style="left:1680.73px;top:539.00px;font-size:15.55px;color:#dcdcdc;transform:scaleX(0.9300);transform-origin:0 0;">70</div>
<div class="t" style="left:1734.31px;top:539.00px;font-size:15.55px;color:#dcdcdc;transform:scaleX(0.9300);transform-origin:0 0;">80</div>
<div class="t" style="left:1787.89px;top:539.00px;font-size:15.55px;color:#dcdcdc;transform:scaleX(0.9300);transform-origin:0 0;">90</div>
<div class="t" style="left:1837.42px;top:539.00px;font-size:15.55px;color:#dcdcdc;transform:scaleX(0.9300);transform-origin:0 0;">100</div>
<div class="a" style="left:200px;top:585px;width:1720px;height:149px;background:#000"></div>
<div class="a" style="left:1918px;top:585px;width:2px;height:149px;background:#333"></div>
<div class="a" style="left:453.5px;top:607px;width:1318px;height:1px;background:#141414"></div>
<div class="a" style="left:453.5px;top:725px;width:1318px;height:1px;background:#141414"></div>
<div class="a" style="left:475.20px;top:612.2px;width:101.6px;height:39.5px;background:#07080c;border:1px solid #f4f4f4;box-shadow:inset 0 0 0 1px #b8b8b8"></div>
<div class="a" style="left:475.20px;top:662.0px;width:101.6px;height:39.5px;background:#000000;border:1px solid #f4f4f4;box-shadow:inset 0 0 0 1px #b8b8b8"></div>
<div class="t" style="left:522.56px;top:708.00px;font-size:12.94px;color:#f4f4f4;transform:scaleX(0.9500);transform-origin:0 0;-webkit-text-stroke:0.3px #f4f4f4;">0</div>
<div class="a" style="left:593.69px;top:612.2px;width:101.6px;height:39.5px;background:#181818;border:1px solid #f4f4f4;box-shadow:inset 0 0 0 1px #b8b8b8"></div>
<div class="a" style="left:593.69px;top:662.0px;width:101.6px;height:39.5px;background:#1c1c1c;border:1px solid #f4f4f4;box-shadow:inset 0 0 0 1px #b8b8b8"></div>
<div class="t" style="left:637.67px;top:708.00px;font-size:12.94px;color:#f4f4f4;transform:scaleX(0.9500);transform-origin:0 0;-webkit-text-stroke:0.3px #f4f4f4;">10</div>
<div class="a" style="left:712.18px;top:612.2px;width:101.6px;height:39.5px;background:#323232;border:1px solid #f4f4f4;box-shadow:inset 0 0 0 1px #b8b8b8"></div>
<div class="a" style="left:712.18px;top:662.0px;width:101.6px;height:39.5px;background:#333333;border:1px solid #f4f4f4;box-shadow:inset 0 0 0 1px #b8b8b8"></div>
<div class="t" style="left:756.16px;top:708.00px;font-size:12.94px;color:#f4f4f4;transform:scaleX(0.9500);transform-origin:0 0;-webkit-text-stroke:0.3px #f4f4f4;">20</div>
<div class="a" style="left:830.67px;top:612.2px;width:101.6px;height:39.5px;background:#4e4e4e;border:1px solid #f4f4f4;box-shadow:inset 0 0 0 1px #b8b8b8"></div>
<div class="a" style="left:830.67px;top:662.0px;width:101.6px;height:39.5px;background:#4d4d4d;border:1px solid #f4f4f4;box-shadow:inset 0 0 0 1px #b8b8b8"></div>
<div class="t" style="left:874.65px;top:708.00px;font-size:12.94px;color:#f4f4f4;transform:scaleX(0.9500);transform-origin:0 0;-webkit-text-stroke:0.3px #f4f4f4;">30</div>
<div class="a" style="left:949.16px;top:612.2px;width:101.6px;height:39.5px;background:#686868;border:1px solid #f4f4f4;box-shadow:inset 0 0 0 1px #b8b8b8"></div>
<div class="a" style="left:949.16px;top:662.0px;width:101.6px;height:39.5px;background:#666666;border:1px solid #f4f4f4;box-shadow:inset 0 0 0 1px #b8b8b8"></div>
<div class="t" style="left:993.14px;top:708.00px;font-size:12.94px;color:#f4f4f4;transform:scaleX(0.9500);transform-origin:0 0;-webkit-text-stroke:0.3px #f4f4f4;">40</div>
<div class="a" style="left:1067.65px;top:612.2px;width:101.6px;height:39.5px;background:#828282;border:1px solid #f4f4f4;box-shadow:inset 0 0 0 1px #b8b8b8"></div>
<div class="a" style="left:1067.65px;top:662.0px;width:101.6px;height:39.5px;background:#808080;border:1px solid #f4f4f4;box-shadow:inset 0 0 0 1px #b8b8b8"></div>
<div class="t" style="left:1111.63px;top:708.00px;font-size:12.94px;color:#f4f4f4;transform:scaleX(0.9500);transform-origin:0 0;-webkit-text-stroke:0.3px #f4f4f4;">50</div>
<div class="a" style="left:1186.14px;top:612.2px;width:101.6px;height:39.5px;background:#9c9c9c;border:1px solid #f4f4f4;box-shadow:inset 0 0 0 1px #b8b8b8"></div>
<div class="a" style="left:1186.14px;top:662.0px;width:101.6px;height:39.5px;background:#999999;border:1px solid #f4f4f4;box-shadow:inset 0 0 0 1px #b8b8b8"></div>
<div class="t" style="left:1230.12px;top:708.00px;font-size:12.94px;color:#f4f4f4;transform:scaleX(0.9500);transform-origin:0 0;-webkit-text-stroke:0.3px #f4f4f4;">60</div>
<div class="a" style="left:1304.63px;top:612.2px;width:101.6px;height:39.5px;background:#b3b3b3;border:1px solid #f4f4f4;box-shadow:inset 0 0 0 1px #b8b8b8"></div>
<div class="a" style="left:1304.63px;top:662.0px;width:101.6px;height:39.5px;background:#b3b3b3;border:1px solid #f4f4f4;box-shadow:inset 0 0 0 1px #b8b8b8"></div>
<div class="t" style="left:1348.61px;top:708.00px;font-size:12.94px;color:#f4f4f4;transform:scaleX(0.9500);transform-origin:0 0;-webkit-text-stroke:0.3px #f4f4f4;">70</div>
<div class="a" style="left:1423.12px;top:612.2px;width:101.6px;height:39.5px;background:#d0ced2;border:1px solid #f4f4f4;box-shadow:inset 0 0 0 1px #b8b8b8"></div>
<div class="a" style="left:1423.12px;top:662.0px;width:101.6px;height:39.5px;background:#cccccc;border:1px solid #f4f4f4;box-shadow:inset 0 0 0 1px #b8b8b8"></div>
<div class="t" style="left:1467.10px;top:708.00px;font-size:12.94px;color:#f4f4f4;transform:scaleX(0.9500);transform-origin:0 0;-webkit-text-stroke:0.3px #f4f4f4;">80</div>
<div class="a" style="left:1541.61px;top:612.2px;width:101.6px;height:39.5px;background:#e6e6e6;border:1px solid #f4f4f4;box-shadow:inset 0 0 0 1px #b8b8b8"></div>
<div class="a" style="left:1541.61px;top:662.0px;width:101.6px;height:39.5px;background:#e6e6e6;border:1px solid #f4f4f4;box-shadow:inset 0 0 0 1px #b8b8b8"></div>
<div class="t" style="left:1585.59px;top:708.00px;font-size:12.94px;color:#f4f4f4;transform:scaleX(0.9500);transform-origin:0 0;-webkit-text-stroke:0.3px #f4f4f4;">90</div>
<div class="a" style="left:1660.10px;top:612.2px;width:101.6px;height:39.5px;background:#ffffff;border:1px solid #f4f4f4;box-shadow:inset 0 0 0 1px #b8b8b8"></div>
<div class="a" style="left:1660.10px;top:662.0px;width:101.6px;height:39.5px;background:#ffffff;border:1px solid #f4f4f4;box-shadow:inset 0 0 0 1px #b8b8b8"></div>
<div class="t" style="left:1700.64px;top:708.00px;font-size:12.94px;color:#f4f4f4;transform:scaleX(0.9500);transform-origin:0 0;-webkit-text-stroke:0.3px #f4f4f4;">100</div>
<div class="t" style="left:462.2px;top:632px;font-size:13px;color:#f0f0f0;transform:translate(-50%,-50%) rotate(-90deg)">Actual</div>
<div class="t" style="left:463.5px;top:682px;font-size:13px;color:#f0f0f0;transform:translate(-50%,-50%) rotate(-90deg)">Target</div>
<div class="a" style="left:200px;top:734px;width:1720px;height:306px;background:#333"></div>
<div class="a" style="left:199px;top:734px;width:2px;height:306px;background:#272727"></div>
<div class="t" style="left:215.50px;top:750.00px;font-size:32.49px;color:#f4f4f4;transform:scaleX(0.9440);transform-origin:0 0;">Current Reading</div>
<div class="t" style="left:215.50px;top:800.00px;font-size:27.03px;color:#f4f4f4;transform:scaleX(0.9432);transform-origin:0 0;">x: 0,3124</div>
<div class="t" style="left:215.50px;top:844.00px;font-size:27.03px;color:#f4f4f4;transform:scaleX(0.9432);transform-origin:0 0;">y: 0,3292</div>
<div class="t" style="left:215.50px;top:889.00px;font-size:27.03px;color:#f4f4f4;transform:scaleX(0.9426);transform-origin:0 0;">fL: 86,268</div>
<div class="t" style="left:215.50px;top:934.00px;font-size:27.03px;color:#f4f4f4;transform:scaleX(0.9910);transform-origin:0 0;">cd/m²: 295,576</div>
<div class="a" style="left:537.5px;top:740.8px;width:302px;height:235px;border:7.5px solid #c5c500;background:#333"></div>
<svg class="a" style="left:0;top:0" width="1920" height="1080"><defs><filter id="blr" x="0" y="0" width="1" height="1"><feGaussianBlur stdDeviation="4"/></filter><clipPath id="cp"><rect x="583.3" y="751.5" width="245.70000000000005" height="187.10000000000002"/></clipPath></defs><g clip-path="url(#cp)"><g filter="url(#blr)"><rect x="568.3" y="736.5" width="25.8" height="25.8" fill="#8bffc7"/><rect x="592.1" y="736.5" width="11.8" height="25.8" fill="#91ffc7"/><rect x="602.0" y="736.5" width="11.8" height="25.8" fill="#96ffc8"/><rect x="611.8" y="736.5" width="11.8" height="25.8" fill="#9bffc9"/><rect x="621.6" y="736.5" width="11.8" height="25.8" fill="#a0ffc9"/><rect x="631.4" y="736.5" width="11.8" height="25.8" fill="#a6ffca"/><rect x="641.3" y="736.5" width="11.8" height="25.8" fill="#acffca"/><rect x="651.1" y="736.5" width="11.8" height="25.8" fill="#b3ffcb"/><rect x="660.9" y="736.5" width="11.8" height="25.8" fill="#bbffcc"/><rect x="670.8" y="736.5" width="11.8" height="25.8" fill="#c3ffcd"/><rect x="680.6" y="736.5" width="11.8" height="25.8" fill="#cbffce"/><rect x="690.4" y="736.5" width="11.8" height="25.8" fill="#d3ffcf"/><rect x="700.2" y="736.5" width="11.8" height="25.8" fill="#daffd0"/><rect x="710.1" y="736.5" width="11.8" height="25.8" fill="#e0ffcf"/><rect x="719.9" y="736.5" width="11.8" height="25.8" fill="#e6ffcf"/><rect x="729.7" y="736.5" width="11.8" height="25.8" fill="#ecffcf"/><rect x="739.5" y="736.5" width="11.8" height="25.8" fill="#f2fece"/><rect x="749.4" y="736.5" width="11.8" height="25.8" fill="#f8fece"/><rect x="759.2" y="736.5" width="11.8" height="25.8" fill="#fefece"/><rect x="769.0" y="736.5" width="11.8" height="25.8" fill="#fffaca"/><rect x="778.9" y="736.5" width="11.8" height="25.8" fill="#fff5c5"/><rect x="788.7" y="736.5" width="11.8" height="25.8" fill="#fff0c1"/><rect x="798.5" y="736.5" width="11.8" height="25.8" fill="#ffebbc"/><rect x="808.3" y="736.5" width="11.8" height="25.8" fill="#ffe6b7"/><rect x="818.2" y="736.5" width="25.8" height="25.8" fill="#ffe1b3"/><rect x="568.3" y="760.3" width="25.8" height="11.8" fill="#8dffcc"/><rect x="592.1" y="760.3" width="11.8" height="11.8" fill="#93ffcc"/><rect x="602.0" y="760.3" width="11.8" height="11.8" fill="#98ffcd"/><rect x="611.8" y="760.3" width="11.8" height="11.8" fill="#9effcd"/><rect x="621.6" y="760.3" width="11.8" height="11.8" fill="#a3ffce"/><rect x="631.4" y="760.3" width="11.8" height="11.8" fill="#a9ffce"/><rect x="641.3" y="760.3" width="11.8" height="11.8" fill="#afffcf"/><rect x="651.1" y="760.3" width="11.8" height="11.8" fill="#b7ffd0"/><rect x="660.9" y="760.3" width="11.8" height="11.8" fill="#bfffd1"/><rect x="670.8" y="760.3" width="11.8" height="11.8" fill="#c7ffd3"/><rect x="680.6" y="760.3" width="11.8" height="11.8" fill="#cfffd4"/><rect x="690.4" y="760.3" width="11.8" height="11.8" fill="#d7ffd5"/><rect x="700.2" y="760.3" width="11.8" height="11.8" fill="#dfffd7"/><rect x="710.1" y="760.3" width="11.8" height="11.8" fill="#e4ffd6"/><rect x="719.9" y="760.3" width="11.8" height="11.8" fill="#e9fed5"/><rect x="729.7" y="760.3" width="11.8" height="11.8" fill="#eefed4"/><rect x="739.5" y="760.3" width="11.8" height="11.8" fill="#f3fdd3"/><rect x="749.4" y="760.3" width="11.8" height="11.8" fill="#f9fdd2"/><rect x="759.2" y="760.3" width="11.8" height="11.8" fill="#fefcd1"/><rect x="769.0" y="760.3" width="11.8" height="11.8" fill="#fff8cd"/><rect x="778.9" y="760.3" width="11.8" height="11.8" fill="#fff3c8"/><rect x="788.7" y="760.3" width="11.8" height="11.8" fill="#ffeec3"/><rect x="798.5" y="760.3" width="11.8" height="11.8" fill="#ffe8be"/><rect x="808.3" y="760.3" width="11.8" height="11.8" fill="#ffe3b9"/><rect x="818.2" y="760.3" width="25.8" height="11.8" fill="#ffdeb4"/><rect x="568.3" y="770.2" width="25.8" height="11.8" fill="#8fffd1"/><rect x="592.1" y="770.2" width="11.8" height="11.8" fill="#95ffd1"/><rect x="602.0" y="770.2" width="11.8" height="11.8" fill="#9bffd1"/><rect x="611.8" y="770.2" width="11.8" height="11.8" fill="#a0ffd2"/><rect x="621.6" y="770.2" width="11.8" height="11.8" fill="#a6ffd2"/><rect x="631.4" y="770.2" width="11.8" height="11.8" fill="#acffd2"/><rect x="641.3" y="770.2" width="11.8" height="11.8" fill="#b2ffd3"/><rect x="651.1" y="770.2" width="11.8" height="11.8" fill="#bbffd5"/><rect x="660.9" y="770.2" width="11.8" height="11.8" fill="#c3ffd7"/><rect x="670.8" y="770.2" width="11.8" height="11.8" fill="#cbffd8"/><rect x="680.6" y="770.2" width="11.8" height="11.8" fill="#d3ffda"/><rect x="690.4" y="770.2" width="11.8" height="11.8" fill="#dbffdc"/><rect x="700.2" y="770.2" width="11.8" height="11.8" fill="#e4ffde"/><rect x="710.1" y="770.2" width="11.8" height="11.8" fill="#e8fedc"/><rect x="719.9" y="770.2" width="11.8" height="11.8" fill="#ecfddb"/><rect x="729.7" y="770.2" width="11.8" height="11.8" fill="#f1fdd9"/><rect x="739.5" y="770.2" width="11.8" height="11.8" fill="#f5fcd8"/><rect x="749.4" y="770.2" width="11.8" height="11.8" fill="#fafbd6"/><rect x="759.2" y="770.2" width="11.8" height="11.8" fill="#fefad5"/><rect x="769.0" y="770.2" width="11.8" height="11.8" fill="#fff6d0"/><rect x="778.9" y="770.2" width="11.8" height="11.8" fill="#fff1cb"/><rect x="788.7" y="770.2" width="11.8" height="11.8" fill="#ffebc5"/><rect x="798.5" y="770.2" width="11.8" height="11.8" fill="#ffe5c0"/><rect x="808.3" y="770.2" width="11.8" height="11.8" fill="#ffe0ba"/><rect x="818.2" y="770.2" width="25.8" height="11.8" fill="#ffdab5"/><rect x="568.3" y="780.0" width="25.8" height="11.8" fill="#91ffd6"/><rect x="592.1" y="780.0" width="11.8" height="11.8" fill="#97ffd6"/><rect x="602.0" y="780.0" width="11.8" height="11.8" fill="#9dffd6"/><rect x="611.8" y="780.0" width="11.8" height="11.8" fill="#a3ffd6"/><rect x="621.6" y="780.0" width="11.8" height="11.8" fill="#a9ffd6"/><rect x="631.4" y="780.0" width="11.8" height="11.8" fill="#afffd7"/><rect x="641.3" y="780.0" width="11.8" height="11.8" fill="#b6ffd7"/><rect x="651.1" y="780.0" width="11.8" height="11.8" fill="#beffda"/><rect x="660.9" y="780.0" width="11.8" height="11.8" fill="#c7ffdc"/><rect x="670.8" y="780.0" width="11.8" height="11.8" fill="#cfffde"/><rect x="680.6" y="780.0" width="11.8" height="11.8" fill="#d7ffe0"/><rect x="690.4" y="780.0" width="11.8" height="11.8" fill="#e0ffe3"/><rect x="700.2" y="780.0" width="11.8" height="11.8" fill="#e8ffe5"/><rect x="710.1" y="780.0" width="11.8" height="11.8" fill="#ecfee3"/><rect x="719.9" y="780.0" width="11.8" height="11.8" fill="#f0fde1"/><rect x="729.7" y="780.0" width="11.8" height="11.8" fill="#f3fcdf"/><rect x="739.5" y="780.0" width="11.8" height="11.8" fill="#f7fbdd"/><rect x="749.4" y="780.0" width="11.8" height="11.8" fill="#fafada"/><rect x="759.2" y="780.0" width="11.8" height="11.8" fill="#fef9d8"/><rect x="769.0" y="780.0" width="11.8" height="11.8" fill="#fff4d3"/><rect x="778.9" y="780.0" width="11.8" height="11.8" fill="#ffeecd"/><rect x="788.7" y="780.0" width="11.8" height="11.8" fill="#ffe8c8"/><rect x="798.5" y="780.0" width="11.8" height="11.8" fill="#ffe3c2"/><rect x="808.3" y="780.0" width="11.8" height="11.8" fill="#ffddbc"/><rect x="818.2" y="780.0" width="25.8" height="11.8" fill="#ffd7b6"/><rect x="568.3" y="789.9" width="25.8" height="11.8" fill="#93ffdb"/><rect x="592.1" y="789.9" width="11.8" height="11.8" fill="#99ffdb"/><rect x="602.0" y="789.9" width="11.8" height="11.8" fill="#9fffdb"/><rect x="611.8" y="789.9" width="11.8" height="11.8" fill="#a6ffdb"/><rect x="621.6" y="789.9" width="11.8" height="11.8" fill="#acffdb"/><rect x="631.4" y="789.9" width="11.8" height="11.8" fill="#b2ffdb"/><rect x="641.3" y="789.9" width="11.8" height="11.8" fill="#b9ffdc"/><rect x="651.1" y="789.9" width="11.8" height="11.8" fill="#c2ffde"/><rect x="660.9" y="789.9" width="11.8" height="11.8" fill="#caffe1"/><rect x="670.8" y="789.9" width="11.8" height="11.8" fill="#d3ffe4"/><rect x="680.6" y="789.9" width="11.8" height="11.8" fill="#dcffe7"/><rect x="690.4" y="789.9" width="11.8" height="11.8" fill="#e4ffe9"/><rect x="700.2" y="789.9" width="11.8" height="11.8" fill="#edffec"/><rect x="710.1" y="789.9" width="11.8" height="11.8" fill="#f0fee9"/><rect x="719.9" y="789.9" width="11.8" height="11.8" fill="#f3fce7"/><rect x="729.7" y="789.9" width="11.8" height="11.8" fill="#f6fbe4"/><rect x="739.5" y="789.9" width="11.8" height="11.8" fill="#f8fae1"/><rect x="749.4" y="789.9" width="11.8" height="11.8" fill="#fbf8df"/><rect x="759.2" y="789.9" width="11.8" height="11.8" fill="#fef7dc"/><rect x="769.0" y="789.9" width="11.8" height="11.8" fill="#fff2d6"/><rect x="778.9" y="789.9" width="11.8" height="11.8" fill="#ffecd0"/><rect x="788.7" y="789.9" width="11.8" height="11.8" fill="#ffe6ca"/><rect x="798.5" y="789.9" width="11.8" height="11.8" fill="#ffe0c4"/><rect x="808.3" y="789.9" width="11.8" height="11.8" fill="#ffdabd"/><rect x="818.2" y="789.9" width="25.8" height="11.8" fill="#ffd4b7"/><rect x="568.3" y="799.7" width="25.8" height="11.8" fill="#95ffe0"/><rect x="592.1" y="799.7" width="11.8" height="11.8" fill="#9bffe0"/><rect x="602.0" y="799.7" width="11.8" height="11.8" fill="#a2ffe0"/><rect x="611.8" y="799.7" width="11.8" height="11.8" fill="#a9ffe0"/><rect x="621.6" y="799.7" width="11.8" height="11.8" fill="#b0ffe0"/><rect x="631.4" y="799.7" width="11.8" height="11.8" fill="#b7ffe0"/><rect x="641.3" y="799.7" width="11.8" height="11.8" fill="#beffe1"/><rect x="651.1" y="799.7" width="11.8" height="11.8" fill="#c6ffe4"/><rect x="660.9" y="799.7" width="11.8" height="11.8" fill="#cfffe6"/><rect x="670.8" y="799.7" width="11.8" height="11.8" fill="#d7ffe9"/><rect x="680.6" y="799.7" width="11.8" height="11.8" fill="#e0ffeb"/><rect x="690.4" y="799.7" width="11.8" height="11.8" fill="#e8ffee"/><rect x="700.2" y="799.7" width="11.8" height="11.8" fill="#f1fff1"/><rect x="710.1" y="799.7" width="11.8" height="11.8" fill="#f3fdee"/><rect x="719.9" y="799.7" width="11.8" height="11.8" fill="#f5fbeb"/><rect x="729.7" y="799.7" width="11.8" height="11.8" fill="#f8fae8"/><rect x="739.5" y="799.7" width="11.8" height="11.8" fill="#faf8e5"/><rect x="749.4" y="799.7" width="11.8" height="11.8" fill="#fcf6e2"/><rect x="759.2" y="799.7" width="11.8" height="11.8" fill="#fef4e0"/><rect x="769.0" y="799.7" width="11.8" height="11.8" fill="#ffefda"/><rect x="778.9" y="799.7" width="11.8" height="11.8" fill="#ffe9d3"/><rect x="788.7" y="799.7" width="11.8" height="11.8" fill="#ffe3cc"/><rect x="798.5" y="799.7" width="11.8" height="11.8" fill="#ffdcc5"/><rect x="808.3" y="799.7" width="11.8" height="11.8" fill="#ffd6be"/><rect x="818.2" y="799.7" width="25.8" height="11.8" fill="#ffd0b7"/><rect x="568.3" y="809.6" width="25.8" height="11.8" fill="#97ffe5"/><rect x="592.1" y="809.6" width="11.8" height="11.8" fill="#9effe5"/><rect x="602.0" y="809.6" width="11.8" height="11.8" fill="#a5ffe5"/><rect x="611.8" y="809.6" width="11.8" height="11.8" fill="#adffe6"/><rect x="621.6" y="809.6" width="11.8" height="11.8" fill="#b4ffe6"/><rect x="631.4" y="809.6" width="11.8" height="11.8" fill="#bbffe6"/><rect x="641.3" y="809.6" width="11.8" height="11.8" fill="#c3ffe7"/><rect x="651.1" y="809.6" width="11.8" height="11.8" fill="#cbffe9"/><rect x="660.9" y="809.6" width="11.8" height="11.8" fill="#d3ffeb"/><rect x="670.8" y="809.6" width="11.8" height="11.8" fill="#dcffee"/><rect x="680.6" y="809.6" width="11.8" height="11.8" fill="#e4fff0"/><rect x="690.4" y="809.6" width="11.8" height="11.8" fill="#ecfff2"/><rect x="700.2" y="809.6" width="11.8" height="11.8" fill="#f4fff4"/><rect x="710.1" y="809.6" width="11.8" height="11.8" fill="#f6fdf1"/><rect x="719.9" y="809.6" width="11.8" height="11.8" fill="#f8faef"/><rect x="729.7" y="809.6" width="11.8" height="11.8" fill="#f9f8ec"/><rect x="739.5" y="809.6" width="11.8" height="11.8" fill="#fbf6e9"/><rect x="749.4" y="809.6" width="11.8" height="11.8" fill="#fdf4e6"/><rect x="759.2" y="809.6" width="11.8" height="11.8" fill="#fff1e3"/><rect x="769.0" y="809.6" width="11.8" height="11.8" fill="#ffecdd"/><rect x="778.9" y="809.6" width="11.8" height="11.8" fill="#ffe6d6"/><rect x="788.7" y="809.6" width="11.8" height="11.8" fill="#ffdfce"/><rect x="798.5" y="809.6" width="11.8" height="11.8" fill="#ffd9c7"/><rect x="808.3" y="809.6" width="11.8" height="11.8" fill="#ffd2bf"/><rect x="818.2" y="809.6" width="25.8" height="11.8" fill="#ffccb8"/><rect x="568.3" y="819.4" width="25.8" height="11.8" fill="#99ffea"/><rect x="592.1" y="819.4" width="11.8" height="11.8" fill="#a0ffea"/><rect x="602.0" y="819.4" width="11.8" height="11.8" fill="#a8ffeb"/><rect x="611.8" y="819.4" width="11.8" height="11.8" fill="#b0ffeb"/><rect x="621.6" y="819.4" width="11.8" height="11.8" fill="#b8ffec"/><rect x="631.4" y="819.4" width="11.8" height="11.8" fill="#c0ffec"/><rect x="641.3" y="819.4" width="11.8" height="11.8" fill="#c8ffed"/><rect x="651.1" y="819.4" width="11.8" height="11.8" fill="#d0ffef"/><rect x="660.9" y="819.4" width="11.8" height="11.8" fill="#d8fff0"/><rect x="670.8" y="819.4" width="11.8" height="11.8" fill="#e0fff2"/><rect x="680.6" y="819.4" width="11.8" height="11.8" fill="#e8fff4"/><rect x="690.4" y="819.4" width="11.8" height="11.8" fill="#f0fff6"/><rect x="700.2" y="819.4" width="11.8" height="11.8" fill="#f8fff8"/><rect x="710.1" y="819.4" width="11.8" height="11.8" fill="#f9fcf5"/><rect x="719.9" y="819.4" width="11.8" height="11.8" fill="#fafaf2"/><rect x="729.7" y="819.4" width="11.8" height="11.8" fill="#fbf7ef"/><rect x="739.5" y="819.4" width="11.8" height="11.8" fill="#fcf4ed"/><rect x="749.4" y="819.4" width="11.8" height="11.8" fill="#fef1ea"/><rect x="759.2" y="819.4" width="11.8" height="11.8" fill="#ffefe7"/><rect x="769.0" y="819.4" width="11.8" height="11.8" fill="#ffe9e0"/><rect x="778.9" y="819.4" width="11.8" height="11.8" fill="#ffe2d8"/><rect x="788.7" y="819.4" width="11.8" height="11.8" fill="#ffdcd0"/><rect x="798.5" y="819.4" width="11.8" height="11.8" fill="#ffd5c8"/><rect x="808.3" y="819.4" width="11.8" height="11.8" fill="#ffcec0"/><rect x="818.2" y="819.4" width="25.8" height="11.8" fill="#ffc8b8"/><rect x="568.3" y="829.3" width="25.8" height="11.8" fill="#9bffef"/><rect x="592.1" y="829.3" width="11.8" height="11.8" fill="#a3fff0"/><rect x="602.0" y="829.3" width="11.8" height="11.8" fill="#abfff0"/><rect x="611.8" y="829.3" width="11.8" height="11.8" fill="#b4fff1"/><rect x="621.6" y="829.3" width="11.8" height="11.8" fill="#bcfff1"/><rect x="631.4" y="829.3" width="11.8" height="11.8" fill="#c5fff2"/><rect x="641.3" y="829.3" width="11.8" height="11.8" fill="#cdfff2"/><rect x="651.1" y="829.3" width="11.8" height="11.8" fill="#d5fff4"/><rect x="660.9" y="829.3" width="11.8" height="11.8" fill="#dcfff5"/><rect x="670.8" y="829.3" width="11.8" height="11.8" fill="#e4fff7"/><rect x="680.6" y="829.3" width="11.8" height="11.8" fill="#ecfff8"/><rect x="690.4" y="829.3" width="11.8" height="11.8" fill="#f4fffa"/><rect x="700.2" y="829.3" width="11.8" height="11.8" fill="#fbfffb"/><rect x="710.1" y="829.3" width="11.8" height="11.8" fill="#fcfcf9"/><rect x="719.9" y="829.3" width="11.8" height="11.8" fill="#fdf9f6"/><rect x="729.7" y="829.3" width="11.8" height="11.8" fill="#fdf5f3"/><rect x="739.5" y="829.3" width="11.8" height="11.8" fill="#fef2f0"/><rect x="749.4" y="829.3" width="11.8" height="11.8" fill="#feefee"/><rect x="759.2" y="829.3" width="11.8" height="11.8" fill="#ffeceb"/><rect x="769.0" y="829.3" width="11.8" height="11.8" fill="#ffe6e4"/><rect x="778.9" y="829.3" width="11.8" height="11.8" fill="#ffdfdb"/><rect x="788.7" y="829.3" width="11.8" height="11.8" fill="#ffd8d2"/><rect x="798.5" y="829.3" width="11.8" height="11.8" fill="#ffd1ca"/><rect x="808.3" y="829.3" width="11.8" height="11.8" fill="#ffcac1"/><rect x="818.2" y="829.3" width="25.8" height="11.8" fill="#ffc4b8"/><rect x="568.3" y="839.1" width="25.8" height="11.8" fill="#9cfff4"/><rect x="592.1" y="839.1" width="11.8" height="11.8" fill="#a5fff5"/><rect x="602.0" y="839.1" width="11.8" height="11.8" fill="#aefff6"/><rect x="611.8" y="839.1" width="11.8" height="11.8" fill="#b7fff6"/><rect x="621.6" y="839.1" width="11.8" height="11.8" fill="#c0fff7"/><rect x="631.4" y="839.1" width="11.8" height="11.8" fill="#c9fff8"/><rect x="641.3" y="839.1" width="11.8" height="11.8" fill="#d2fff8"/><rect x="651.1" y="839.1" width="11.8" height="11.8" fill="#d9fff9"/><rect x="660.9" y="839.1" width="11.8" height="11.8" fill="#e1fffb"/><rect x="670.8" y="839.1" width="11.8" height="11.8" fill="#e8fffc"/><rect x="680.6" y="839.1" width="11.8" height="11.8" fill="#f0fffd"/><rect x="690.4" y="839.1" width="11.8" height="11.8" fill="#f7fffe"/><rect x="700.2" y="839.1" width="11.8" height="11.8" fill="#ffffff"/><rect x="710.1" y="839.1" width="11.8" height="11.8" fill="#fffbfc"/><rect x="719.9" y="839.1" width="11.8" height="11.8" fill="#fff8fa"/><rect x="729.7" y="839.1" width="11.8" height="11.8" fill="#fff4f7"/><rect x="739.5" y="839.1" width="11.8" height="11.8" fill="#fff0f4"/><rect x="749.4" y="839.1" width="11.8" height="11.8" fill="#ffedf1"/><rect x="759.2" y="839.1" width="11.8" height="11.8" fill="#ffe9ef"/><rect x="769.0" y="839.1" width="11.8" height="11.8" fill="#ffe3e7"/><rect x="778.9" y="839.1" width="11.8" height="11.8" fill="#ffdcde"/><rect x="788.7" y="839.1" width="11.8" height="11.8" fill="#ffd5d4"/><rect x="798.5" y="839.1" width="11.8" height="11.8" fill="#ffcecb"/><rect x="808.3" y="839.1" width="11.8" height="11.8" fill="#ffc7c2"/><rect x="818.2" y="839.1" width="25.8" height="11.8" fill="#ffc0b9"/><rect x="568.3" y="849.0" width="25.8" height="11.8" fill="#9ef9f7"/><rect x="592.1" y="849.0" width="11.8" height="11.8" fill="#a7f9f7"/><rect x="602.0" y="849.0" width="11.8" height="11.8" fill="#b0f9f8"/><rect x="611.8" y="849.0" width="11.8" height="11.8" fill="#b9f9f8"/><rect x="621.6" y="849.0" width="11.8" height="11.8" fill="#c1f9f9"/><rect x="631.4" y="849.0" width="11.8" height="11.8" fill="#caf9f9"/><rect x="641.3" y="849.0" width="11.8" height="11.8" fill="#d3f9fa"/><rect x="651.1" y="849.0" width="11.8" height="11.8" fill="#daf9fb"/><rect x="660.9" y="849.0" width="11.8" height="11.8" fill="#e1fafb"/><rect x="670.8" y="849.0" width="11.8" height="11.8" fill="#e8fafc"/><rect x="680.6" y="849.0" width="11.8" height="11.8" fill="#effafd"/><rect x="690.4" y="849.0" width="11.8" height="11.8" fill="#f6fafe"/><rect x="700.2" y="849.0" width="11.8" height="11.8" fill="#fefaff"/><rect x="710.1" y="849.0" width="11.8" height="11.8" fill="#fef6fc"/><rect x="719.9" y="849.0" width="11.8" height="11.8" fill="#fef3f9"/><rect x="729.7" y="849.0" width="11.8" height="11.8" fill="#feeff7"/><rect x="739.5" y="849.0" width="11.8" height="11.8" fill="#feebf4"/><rect x="749.4" y="849.0" width="11.8" height="11.8" fill="#ffe8f1"/><rect x="759.2" y="849.0" width="11.8" height="11.8" fill="#ffe4ee"/><rect x="769.0" y="849.0" width="11.8" height="11.8" fill="#ffdee7"/><rect x="778.9" y="849.0" width="11.8" height="11.8" fill="#ffd7de"/><rect x="788.7" y="849.0" width="11.8" height="11.8" fill="#ffd0d5"/><rect x="798.5" y="849.0" width="11.8" height="11.8" fill="#ffc9cd"/><rect x="808.3" y="849.0" width="11.8" height="11.8" fill="#ffc2c4"/><rect x="818.2" y="849.0" width="25.8" height="11.8" fill="#ffbbbb"/><rect x="568.3" y="858.8" width="25.8" height="11.8" fill="#a0f2f9"/><rect x="592.1" y="858.8" width="11.8" height="11.8" fill="#a8f2f9"/><rect x="602.0" y="858.8" width="11.8" height="11.8" fill="#b1f3fa"/><rect x="611.8" y="858.8" width="11.8" height="11.8" fill="#baf3fa"/><rect x="621.6" y="858.8" width="11.8" height="11.8" fill="#c2f3fa"/><rect x="631.4" y="858.8" width="11.8" height="11.8" fill="#cbf3fb"/><rect x="641.3" y="858.8" width="11.8" height="11.8" fill="#d3f4fb"/><rect x="651.1" y="858.8" width="11.8" height="11.8" fill="#daf4fc"/><rect x="660.9" y="858.8" width="11.8" height="11.8" fill="#e1f4fc"/><rect x="670.8" y="858.8" width="11.8" height="11.8" fill="#e8f5fd"/><rect x="680.6" y="858.8" width="11.8" height="11.8" fill="#eef5fe"/><rect x="690.4" y="858.8" width="11.8" height="11.8" fill="#f5f5fe"/><rect x="700.2" y="858.8" width="11.8" height="11.8" fill="#fcf5ff"/><rect x="710.1" y="858.8" width="11.8" height="11.8" fill="#fdf2fc"/><rect x="719.9" y="858.8" width="11.8" height="11.8" fill="#fdeef9"/><rect x="729.7" y="858.8" width="11.8" height="11.8" fill="#fdeaf6"/><rect x="739.5" y="858.8" width="11.8" height="11.8" fill="#fee6f4"/><rect x="749.4" y="858.8" width="11.8" height="11.8" fill="#fee3f1"/><rect x="759.2" y="858.8" width="11.8" height="11.8" fill="#ffdfee"/><rect x="769.0" y="858.8" width="11.8" height="11.8" fill="#ffd9e7"/><rect x="778.9" y="858.8" width="11.8" height="11.8" fill="#ffd2df"/><rect x="788.7" y="858.8" width="11.8" height="11.8" fill="#ffcbd6"/><rect x="798.5" y="858.8" width="11.8" height="11.8" fill="#ffc5ce"/><rect x="808.3" y="858.8" width="11.8" height="11.8" fill="#ffbec6"/><rect x="818.2" y="858.8" width="25.8" height="11.8" fill="#ffb7bd"/><rect x="568.3" y="868.7" width="25.8" height="11.8" fill="#a1ecfb"/><rect x="592.1" y="868.7" width="11.8" height="11.8" fill="#aaecfb"/><rect x="602.0" y="868.7" width="11.8" height="11.8" fill="#b2ecfc"/><rect x="611.8" y="868.7" width="11.8" height="11.8" fill="#bbedfc"/><rect x="621.6" y="868.7" width="11.8" height="11.8" fill="#c4edfc"/><rect x="631.4" y="868.7" width="11.8" height="11.8" fill="#cceefc"/><rect x="641.3" y="868.7" width="11.8" height="11.8" fill="#d4eefd"/><rect x="651.1" y="868.7" width="11.8" height="11.8" fill="#dbeefd"/><rect x="660.9" y="868.7" width="11.8" height="11.8" fill="#e1effd"/><rect x="670.8" y="868.7" width="11.8" height="11.8" fill="#e7effe"/><rect x="680.6" y="868.7" width="11.8" height="11.8" fill="#eef0fe"/><rect x="690.4" y="868.7" width="11.8" height="11.8" fill="#f4f0ff"/><rect x="700.2" y="868.7" width="11.8" height="11.8" fill="#fbf0ff"/><rect x="710.1" y="868.7" width="11.8" height="11.8" fill="#fbedfc"/><rect x="719.9" y="868.7" width="11.8" height="11.8" fill="#fce9f9"/><rect x="729.7" y="868.7" width="11.8" height="11.8" fill="#fde5f6"/><rect x="739.5" y="868.7" width="11.8" height="11.8" fill="#fde1f3"/><rect x="749.4" y="868.7" width="11.8" height="11.8" fill="#fedef0"/><rect x="759.2" y="868.7" width="11.8" height="11.8" fill="#ffdaed"/><rect x="769.0" y="868.7" width="11.8" height="11.8" fill="#ffd4e7"/><rect x="778.9" y="868.7" width="11.8" height="11.8" fill="#ffcddf"/><rect x="788.7" y="868.7" width="11.8" height="11.8" fill="#ffc7d7"/><rect x="798.5" y="868.7" width="11.8" height="11.8" fill="#ffc0cf"/><rect x="808.3" y="868.7" width="11.8" height="11.8" fill="#ffb9c7"/><rect x="818.2" y="868.7" width="25.8" height="11.8" fill="#ffb3c0"/><rect x="568.3" y="878.5" width="25.8" height="11.8" fill="#a3e5fd"/><rect x="592.1" y="878.5" width="11.8" height="11.8" fill="#abe6fd"/><rect x="602.0" y="878.5" width="11.8" height="11.8" fill="#b4e6fe"/><rect x="611.8" y="878.5" width="11.8" height="11.8" fill="#bce7fe"/><rect x="621.6" y="878.5" width="11.8" height="11.8" fill="#c5e7fe"/><rect x="631.4" y="878.5" width="11.8" height="11.8" fill="#cde8fe"/><rect x="641.3" y="878.5" width="11.8" height="11.8" fill="#d5e8fe"/><rect x="651.1" y="878.5" width="11.8" height="11.8" fill="#dbe9fe"/><rect x="660.9" y="878.5" width="11.8" height="11.8" fill="#e1e9fe"/><rect x="670.8" y="878.5" width="11.8" height="11.8" fill="#e7eafe"/><rect x="680.6" y="878.5" width="11.8" height="11.8" fill="#edebff"/><rect x="690.4" y="878.5" width="11.8" height="11.8" fill="#f3ebff"/><rect x="700.2" y="878.5" width="11.8" height="11.8" fill="#f9ecff"/><rect x="710.1" y="878.5" width="11.8" height="11.8" fill="#fae8fc"/><rect x="719.9" y="878.5" width="11.8" height="11.8" fill="#fbe4f9"/><rect x="729.7" y="878.5" width="11.8" height="11.8" fill="#fce0f6"/><rect x="739.5" y="878.5" width="11.8" height="11.8" fill="#fddcf3"/><rect x="749.4" y="878.5" width="11.8" height="11.8" fill="#fed9f0"/><rect x="759.2" y="878.5" width="11.8" height="11.8" fill="#ffd5ed"/><rect x="769.0" y="878.5" width="11.8" height="11.8" fill="#ffcfe7"/><rect x="778.9" y="878.5" width="11.8" height="11.8" fill="#ffc8df"/><rect x="788.7" y="878.5" width="11.8" height="11.8" fill="#ffc2d8"/><rect x="798.5" y="878.5" width="11.8" height="11.8" fill="#ffbbd1"/><rect x="808.3" y="878.5" width="11.8" height="11.8" fill="#ffb5c9"/><rect x="818.2" y="878.5" width="25.8" height="11.8" fill="#ffaec2"/><rect x="568.3" y="888.4" width="25.8" height="11.8" fill="#a5dfff"/><rect x="592.1" y="888.4" width="11.8" height="11.8" fill="#addfff"/><rect x="602.0" y="888.4" width="11.8" height="11.8" fill="#b5e0ff"/><rect x="611.8" y="888.4" width="11.8" height="11.8" fill="#bde0ff"/><rect x="621.6" y="888.4" width="11.8" height="11.8" fill="#c5e1ff"/><rect x="631.4" y="888.4" width="11.8" height="11.8" fill="#cee2ff"/><rect x="641.3" y="888.4" width="11.8" height="11.8" fill="#d5e2ff"/><rect x="651.1" y="888.4" width="11.8" height="11.8" fill="#dbe3ff"/><rect x="660.9" y="888.4" width="11.8" height="11.8" fill="#e1e3ff"/><rect x="670.8" y="888.4" width="11.8" height="11.8" fill="#e7e4ff"/><rect x="680.6" y="888.4" width="11.8" height="11.8" fill="#ece5ff"/><rect x="690.4" y="888.4" width="11.8" height="11.8" fill="#f2e5ff"/><rect x="700.2" y="888.4" width="11.8" height="11.8" fill="#f8e6ff"/><rect x="710.1" y="888.4" width="11.8" height="11.8" fill="#f9e2fc"/><rect x="719.9" y="888.4" width="11.8" height="11.8" fill="#fadef9"/><rect x="729.7" y="888.4" width="11.8" height="11.8" fill="#fbdbf5"/><rect x="739.5" y="888.4" width="11.8" height="11.8" fill="#fcd7f2"/><rect x="749.4" y="888.4" width="11.8" height="11.8" fill="#fed3ef"/><rect x="759.2" y="888.4" width="11.8" height="11.8" fill="#ffcfec"/><rect x="769.0" y="888.4" width="11.8" height="11.8" fill="#ffcae6"/><rect x="778.9" y="888.4" width="11.8" height="11.8" fill="#ffc3df"/><rect x="788.7" y="888.4" width="11.8" height="11.8" fill="#ffbdd8"/><rect x="798.5" y="888.4" width="11.8" height="11.8" fill="#ffb6d1"/><rect x="808.3" y="888.4" width="11.8" height="11.8" fill="#ffb0ca"/><rect x="818.2" y="888.4" width="25.8" height="11.8" fill="#ffaac3"/><rect x="568.3" y="898.2" width="25.8" height="11.8" fill="#a6d8ff"/><rect x="592.1" y="898.2" width="11.8" height="11.8" fill="#aed8ff"/><rect x="602.0" y="898.2" width="11.8" height="11.8" fill="#b6d9ff"/><rect x="611.8" y="898.2" width="11.8" height="11.8" fill="#bdd9ff"/><rect x="621.6" y="898.2" width="11.8" height="11.8" fill="#c5daff"/><rect x="631.4" y="898.2" width="11.8" height="11.8" fill="#cddaff"/><rect x="641.3" y="898.2" width="11.8" height="11.8" fill="#d4dbff"/><rect x="651.1" y="898.2" width="11.8" height="11.8" fill="#dadbff"/><rect x="660.9" y="898.2" width="11.8" height="11.8" fill="#e0dcff"/><rect x="670.8" y="898.2" width="11.8" height="11.8" fill="#e6dcff"/><rect x="680.6" y="898.2" width="11.8" height="11.8" fill="#ebddff"/><rect x="690.4" y="898.2" width="11.8" height="11.8" fill="#f1ddff"/><rect x="700.2" y="898.2" width="11.8" height="11.8" fill="#f7ddff"/><rect x="710.1" y="898.2" width="11.8" height="11.8" fill="#f8dafb"/><rect x="719.9" y="898.2" width="11.8" height="11.8" fill="#fad6f8"/><rect x="729.7" y="898.2" width="11.8" height="11.8" fill="#fbd3f4"/><rect x="739.5" y="898.2" width="11.8" height="11.8" fill="#fccff0"/><rect x="749.4" y="898.2" width="11.8" height="11.8" fill="#fdccec"/><rect x="759.2" y="898.2" width="11.8" height="11.8" fill="#ffc8e9"/><rect x="769.0" y="898.2" width="11.8" height="11.8" fill="#ffc3e3"/><rect x="778.9" y="898.2" width="11.8" height="11.8" fill="#ffbcdc"/><rect x="788.7" y="898.2" width="11.8" height="11.8" fill="#ffb6d5"/><rect x="798.5" y="898.2" width="11.8" height="11.8" fill="#ffb0ce"/><rect x="808.3" y="898.2" width="11.8" height="11.8" fill="#ffa9c7"/><rect x="818.2" y="898.2" width="25.8" height="11.8" fill="#ffa3c0"/><rect x="568.3" y="908.1" width="25.8" height="11.8" fill="#a7d1ff"/><rect x="592.1" y="908.1" width="11.8" height="11.8" fill="#afd1ff"/><rect x="602.0" y="908.1" width="11.8" height="11.8" fill="#b6d2ff"/><rect x="611.8" y="908.1" width="11.8" height="11.8" fill="#bed2ff"/><rect x="621.6" y="908.1" width="11.8" height="11.8" fill="#c5d2ff"/><rect x="631.4" y="908.1" width="11.8" height="11.8" fill="#cdd3ff"/><rect x="641.3" y="908.1" width="11.8" height="11.8" fill="#d4d3ff"/><rect x="651.1" y="908.1" width="11.8" height="11.8" fill="#d9d3ff"/><rect x="660.9" y="908.1" width="11.8" height="11.8" fill="#dfd4ff"/><rect x="670.8" y="908.1" width="11.8" height="11.8" fill="#e5d4ff"/><rect x="680.6" y="908.1" width="11.8" height="11.8" fill="#ebd4ff"/><rect x="690.4" y="908.1" width="11.8" height="11.8" fill="#f0d5ff"/><rect x="700.2" y="908.1" width="11.8" height="11.8" fill="#f6d5ff"/><rect x="710.1" y="908.1" width="11.8" height="11.8" fill="#f8d2fb"/><rect x="719.9" y="908.1" width="11.8" height="11.8" fill="#f9cff6"/><rect x="729.7" y="908.1" width="11.8" height="11.8" fill="#facbf2"/><rect x="739.5" y="908.1" width="11.8" height="11.8" fill="#fcc8ee"/><rect x="749.4" y="908.1" width="11.8" height="11.8" fill="#fdc5ea"/><rect x="759.2" y="908.1" width="11.8" height="11.8" fill="#ffc2e5"/><rect x="769.0" y="908.1" width="11.8" height="11.8" fill="#ffbcdf"/><rect x="778.9" y="908.1" width="11.8" height="11.8" fill="#ffb6d9"/><rect x="788.7" y="908.1" width="11.8" height="11.8" fill="#ffafd2"/><rect x="798.5" y="908.1" width="11.8" height="11.8" fill="#ffa9cb"/><rect x="808.3" y="908.1" width="11.8" height="11.8" fill="#ffa2c4"/><rect x="818.2" y="908.1" width="25.8" height="11.8" fill="#ff9cbe"/><rect x="568.3" y="917.9" width="25.8" height="11.8" fill="#a9caff"/><rect x="592.1" y="917.9" width="11.8" height="11.8" fill="#b0caff"/><rect x="602.0" y="917.9" width="11.8" height="11.8" fill="#b7cbff"/><rect x="611.8" y="917.9" width="11.8" height="11.8" fill="#becbff"/><rect x="621.6" y="917.9" width="11.8" height="11.8" fill="#c5cbff"/><rect x="631.4" y="917.9" width="11.8" height="11.8" fill="#cccbff"/><rect x="641.3" y="917.9" width="11.8" height="11.8" fill="#d3cbff"/><rect x="651.1" y="917.9" width="11.8" height="11.8" fill="#d8ccff"/><rect x="660.9" y="917.9" width="11.8" height="11.8" fill="#deccff"/><rect x="670.8" y="917.9" width="11.8" height="11.8" fill="#e4ccff"/><rect x="680.6" y="917.9" width="11.8" height="11.8" fill="#eaccff"/><rect x="690.4" y="917.9" width="11.8" height="11.8" fill="#f0ccff"/><rect x="700.2" y="917.9" width="11.8" height="11.8" fill="#f5cdff"/><rect x="710.1" y="917.9" width="11.8" height="11.8" fill="#f7cafa"/><rect x="719.9" y="917.9" width="11.8" height="11.8" fill="#f8c7f5"/><rect x="729.7" y="917.9" width="11.8" height="11.8" fill="#fac4f1"/><rect x="739.5" y="917.9" width="11.8" height="11.8" fill="#fbc1ec"/><rect x="749.4" y="917.9" width="11.8" height="11.8" fill="#fdbee7"/><rect x="759.2" y="917.9" width="11.8" height="11.8" fill="#ffbbe2"/><rect x="769.0" y="917.9" width="11.8" height="11.8" fill="#ffb5dc"/><rect x="778.9" y="917.9" width="11.8" height="11.8" fill="#ffafd5"/><rect x="788.7" y="917.9" width="11.8" height="11.8" fill="#ffa9cf"/><rect x="798.5" y="917.9" width="11.8" height="11.8" fill="#ffa2c8"/><rect x="808.3" y="917.9" width="11.8" height="11.8" fill="#ff9cc2"/><rect x="818.2" y="917.9" width="25.8" height="11.8" fill="#ff95bb"/><rect x="568.3" y="927.8" width="25.8" height="25.8" fill="#aac3ff"/><rect x="592.1" y="927.8" width="11.8" height="25.8" fill="#b1c3ff"/><rect x="602.0" y="927.8" width="11.8" height="25.8" fill="#b8c4ff"/><rect x="611.8" y="927.8" width="11.8" height="25.8" fill="#bec4ff"/><rect x="621.6" y="927.8" width="11.8" height="25.8" fill="#c5c4ff"/><rect x="631.4" y="927.8" width="11.8" height="25.8" fill="#cbc4ff"/><rect x="641.3" y="927.8" width="11.8" height="25.8" fill="#d2c4ff"/><rect x="651.1" y="927.8" width="11.8" height="25.8" fill="#d8c4ff"/><rect x="660.9" y="927.8" width="11.8" height="25.8" fill="#ddc4ff"/><rect x="670.8" y="927.8" width="11.8" height="25.8" fill="#e3c4ff"/><rect x="680.6" y="927.8" width="11.8" height="25.8" fill="#e9c4ff"/><rect x="690.4" y="927.8" width="11.8" height="25.8" fill="#efc4ff"/><rect x="700.2" y="927.8" width="11.8" height="25.8" fill="#f4c4ff"/><rect x="710.1" y="927.8" width="11.8" height="25.8" fill="#f6c2fa"/><rect x="719.9" y="927.8" width="11.8" height="25.8" fill="#f8bff4"/><rect x="729.7" y="927.8" width="11.8" height="25.8" fill="#f9bcef"/><rect x="739.5" y="927.8" width="11.8" height="25.8" fill="#fbb9ea"/><rect x="749.4" y="927.8" width="11.8" height="25.8" fill="#fdb7e4"/><rect x="759.2" y="927.8" width="11.8" height="25.8" fill="#ffb4df"/><rect x="769.0" y="927.8" width="11.8" height="25.8" fill="#ffafd9"/><rect x="778.9" y="927.8" width="11.8" height="25.8" fill="#ffa8d2"/><rect x="788.7" y="927.8" width="11.8" height="25.8" fill="#ffa2cc"/><rect x="798.5" y="927.8" width="11.8" height="25.8" fill="#ff9bc5"/><rect x="808.3" y="927.8" width="11.8" height="25.8" fill="#ff95bf"/><rect x="818.2" y="927.8" width="25.8" height="25.8" fill="#ff8fb8"/></g><polyline points="613.30,940.40 616.99,937.36 620.68,934.30 624.37,931.25 628.06,928.18 631.75,925.12 635.44,922.06 639.13,919.00 642.82,915.94 646.51,912.90 650.20,909.86 653.89,906.84 657.58,903.83 661.27,900.84 664.80,898.00 664.96,897.87 668.65,894.91 672.34,891.94 676.03,888.97 679.72,886.00 683.41,883.04 687.10,880.10 690.79,877.17 694.48,874.28 698.17,871.41 701.86,868.58 705.55,865.78 709.24,863.04 712.93,860.34 713.40,860.00 716.62,857.70 720.31,855.12 723.99,852.58 727.68,850.08 731.37,847.61 735.06,845.17 738.75,842.75 742.44,840.34 746.13,837.94 749.82,835.53 753.51,833.12 757.20,830.69 760.89,828.24 762.00,827.50 764.58,825.77 768.27,823.30 771.96,820.82 775.65,818.35 779.34,815.87 783.03,813.40 786.72,810.92 790.41,808.45 794.10,805.97 797.79,803.49 801.48,801.02 805.17,798.54 808.86,796.06 812.55,793.58 816.24,791.11 819.93,788.63 823.62,786.15 827.31,783.68 831.00,781.20" fill="none" stroke="#000" stroke-width="3" stroke-linejoin="round"/><circle cx="717.6" cy="828" r="5.4" fill="#333" stroke="#111" stroke-width="1"/><rect x="697.1" y="837" width="15" height="16.5" fill="none" stroke="#000" stroke-width="2"/><circle cx="708.2" cy="840.8" r="4.9" fill="#b4b4b4" stroke="#111" stroke-width="0.9"/><circle cx="707" cy="846" r="4.9" fill="#bdbdbd" stroke="#111" stroke-width="0.9"/><circle cx="706.3" cy="851.5" r="4.9" fill="#c8c8c8" stroke="#111" stroke-width="0.9"/><circle cx="705" cy="848.8" r="4.9" fill="#e8e8e8" stroke="#111" stroke-width="0.9"/><circle cx="703.6" cy="844.6" r="4.9" fill="#ffffff" stroke="#111" stroke-width="0.9"/><circle cx="705.2" cy="856" r="4.9" fill="#555" stroke="#111" stroke-width="0.9"/><circle cx="699.4" cy="855.6" r="4.9" fill="#2a2a2a" stroke="#111" stroke-width="0.9"/></g><rect x="583.3" y="751.5" width="245.70000000000005" height="187.10000000000002" fill="none" stroke="#8a8a8a" stroke-width="1.6"/><line x1="577" y1="766.8" x2="583.3" y2="766.8" stroke="#ddd" stroke-width="1.6"/><line x1="577" y1="804.1" x2="583.3" y2="804.1" stroke="#ddd" stroke-width="1.6"/><line x1="577" y1="841.5" x2="583.3" y2="841.5" stroke="#ddd" stroke-width="1.6"/><line x1="577" y1="878.8" x2="583.3" y2="878.8" stroke="#ddd" stroke-width="1.6"/><line x1="577" y1="916.2" x2="583.3" y2="916.2" stroke="#ddd" stroke-width="1.6"/><line x1="593.5" y1="938.6" x2="593.5" y2="945.2" stroke="#ddd" stroke-width="1.6"/><line x1="642.5" y1="938.6" x2="642.5" y2="945.2" stroke="#ddd" stroke-width="1.6"/><line x1="691.4" y1="938.6" x2="691.4" y2="945.2" stroke="#ddd" stroke-width="1.6"/><line x1="740.4" y1="938.6" x2="740.4" y2="945.2" stroke="#ddd" stroke-width="1.6"/><line x1="789.3" y1="938.6" x2="789.3" y2="945.2" stroke="#ddd" stroke-width="1.6"/></svg>
<div class="t" style="left:549.58px;top:760.00px;font-size:15.12px;color:#dcdcdc;transform:scaleX(0.9200);transform-origin:0 0;">0,35</div>
<div class="t" style="left:549.58px;top:798.00px;font-size:15.12px;color:#dcdcdc;transform:scaleX(0.9200);transform-origin:0 0;">0,34</div>
<div class="t" style="left:549.58px;top:835.00px;font-size:15.12px;color:#dcdcdc;transform:scaleX(0.9200);transform-origin:0 0;">0,33</div>
<div class="t" style="left:549.58px;top:872.00px;font-size:15.12px;color:#dcdcdc;transform:scaleX(0.9200);transform-origin:0 0;">0,32</div>
<div class="t" style="left:549.58px;top:910.00px;font-size:15.12px;color:#dcdcdc;transform:scaleX(0.9200);transform-origin:0 0;">0,31</div>
<div class="t" style="left:579.81px;top:950.00px;font-size:15.26px;color:#dcdcdc;transform:scaleX(0.9200);transform-origin:0 0;">0,29</div>
<div class="t" style="left:632.69px;top:950.00px;font-size:15.26px;color:#dcdcdc;transform:scaleX(0.9200);transform-origin:0 0;">0,3</div>
<div class="t" style="left:677.71px;top:950.00px;font-size:15.26px;color:#dcdcdc;transform:scaleX(0.9200);transform-origin:0 0;">0,31</div>
<div class="t" style="left:726.66px;top:950.00px;font-size:15.26px;color:#dcdcdc;transform:scaleX(0.9200);transform-origin:0 0;">0,32</div>
<div class="t" style="left:775.61px;top:950.00px;font-size:15.26px;color:#dcdcdc;transform:scaleX(0.9200);transform-origin:0 0;">0,33</div>
<div class="a" style="left:841px;top:742px;width:14px;height:30.5px;background:#000"></div>
<div class="a" style="left:855px;top:742px;width:889.4px;height:16px;background:#2c2c2c"></div>
<div class="a" style="left:855px;top:758px;width:889.4px;height:14.5px;background:#141414"></div>
<div class="t" style="left:993.00px;top:751.00px;font-size:15.41px;color:#fafafa;transform:scaleX(0.9300);transform-origin:0 0;-webkit-text-stroke:0.35px #fafafa;">0</div>
<div class="t" style="left:1070.00px;top:751.00px;font-size:15.41px;color:#fafafa;transform:scaleX(0.9300);transform-origin:0 0;-webkit-text-stroke:0.35px #fafafa;">10</div>
<div class="t" style="left:1138.00px;top:751.00px;font-size:15.41px;color:#fafafa;transform:scaleX(0.9300);transform-origin:0 0;-webkit-text-stroke:0.35px #fafafa;">20</div>
<div class="t" style="left:1206.00px;top:751.00px;font-size:15.41px;color:#fafafa;transform:scaleX(0.9300);transform-origin:0 0;-webkit-text-stroke:0.35px #fafafa;">30</div>
<div class="t" style="left:1274.00px;top:751.00px;font-size:15.41px;color:#fafafa;transform:scaleX(0.9300);transform-origin:0 0;-webkit-text-stroke:0.35px #fafafa;">40</div>
<div class="t" style="left:1341.00px;top:751.00px;font-size:15.41px;color:#fafafa;transform:scaleX(0.9300);transform-origin:0 0;-webkit-text-stroke:0.35px #fafafa;">50</div>
<div class="t" style="left:1409.00px;top:751.00px;font-size:15.41px;color:#fafafa;transform:scaleX(0.9300);transform-origin:0 0;-webkit-text-stroke:0.35px #fafafa;">60</div>
<div class="t" style="left:1477.00px;top:751.00px;font-size:15.41px;color:#fafafa;transform:scaleX(0.9300);transform-origin:0 0;-webkit-text-stroke:0.35px #fafafa;">70</div>
<div class="t" style="left:1545.00px;top:751.00px;font-size:15.41px;color:#fafafa;transform:scaleX(0.9300);transform-origin:0 0;-webkit-text-stroke:0.35px #fafafa;">80</div>
<div class="t" style="left:1613.00px;top:751.00px;font-size:15.41px;color:#fafafa;transform:scaleX(0.9300);transform-origin:0 0;-webkit-text-stroke:0.35px #fafafa;">90</div>
<div class="t" style="left:1681.00px;top:751.00px;font-size:15.41px;color:#fafafa;transform:scaleX(0.9300);transform-origin:0 0;-webkit-text-stroke:0.35px #fafafa;">100</div>
<div class="a" style="left:841px;top:772.5px;width:14px;height:28.2px;background:#282828"></div>
<div class="a" style="left:855px;top:772.5px;width:889.4px;height:28.2px;background:#404040"></div>
<div class="t" style="left:858.60px;top:780.00px;font-size:17.59px;color:#f2f2f2;transform:scaleX(0.8343);transform-origin:0 0;">x: CIE31</div>
<div class="t" style="left:993.00px;top:780.00px;font-size:17.59px;color:#f2f2f2;transform:scaleX(0.8850);transform-origin:0 0;">0,26</div>
<div class="t" style="left:1070.00px;top:780.00px;font-size:17.59px;color:#f2f2f2;transform:scaleX(0.8850);transform-origin:0 0;">0,31</div>
<div class="t" style="left:1138.00px;top:780.00px;font-size:17.59px;color:#f2f2f2;transform:scaleX(0.8850);transform-origin:0 0;">0,32</div>
<div class="t" style="left:1206.00px;top:780.00px;font-size:17.59px;color:#f2f2f2;transform:scaleX(0.8850);transform-origin:0 0;">0,31</div>
<div class="t" style="left:1274.00px;top:780.00px;font-size:17.59px;color:#f2f2f2;transform:scaleX(0.8850);transform-origin:0 0;">0,31</div>
<div class="t" style="left:1341.00px;top:780.00px;font-size:17.59px;color:#f2f2f2;transform:scaleX(0.8850);transform-origin:0 0;">0,31</div>
<div class="t" style="left:1409.00px;top:780.00px;font-size:17.59px;color:#f2f2f2;transform:scaleX(0.8850);transform-origin:0 0;">0,31</div>
<div class="t" style="left:1477.00px;top:780.00px;font-size:17.59px;color:#f2f2f2;transform:scaleX(0.8850);transform-origin:0 0;">0,31</div>
<div class="t" style="left:1545.00px;top:780.00px;font-size:17.59px;color:#f2f2f2;transform:scaleX(0.8850);transform-origin:0 0;">0,31</div>
<div class="t" style="left:1613.00px;top:780.00px;font-size:17.59px;color:#f2f2f2;transform:scaleX(0.8850);transform-origin:0 0;">0,31</div>
<div class="t" style="left:1681.00px;top:780.00px;font-size:17.59px;color:#f2f2f2;transform:scaleX(0.8850);transform-origin:0 0;">0,31</div>
<div class="a" style="left:841px;top:800.67px;width:14px;height:28.2px;background:#222"></div>
<div class="a" style="left:855px;top:800.67px;width:889.4px;height:28.2px;background:#7f7f7f"></div>
<div class="t" style="left:858.60px;top:808.00px;font-size:17.59px;color:#f2f2f2;transform:scaleX(0.8447);transform-origin:0 0;">y: CIE31</div>
<div class="t" style="left:993.00px;top:808.00px;font-size:17.59px;color:#f2f2f2;transform:scaleX(0.8850);transform-origin:0 0;">0,27</div>
<div class="t" style="left:1070.00px;top:808.00px;font-size:17.59px;color:#f2f2f2;transform:scaleX(0.8850);transform-origin:0 0;">0,33</div>
<div class="t" style="left:1138.00px;top:808.00px;font-size:17.59px;color:#f2f2f2;transform:scaleX(0.8850);transform-origin:0 0;">0,33</div>
<div class="t" style="left:1206.00px;top:808.00px;font-size:17.59px;color:#f2f2f2;transform:scaleX(0.8850);transform-origin:0 0;">0,33</div>
<div class="t" style="left:1274.00px;top:808.00px;font-size:17.59px;color:#f2f2f2;transform:scaleX(0.8850);transform-origin:0 0;">0,33</div>
<div class="t" style="left:1341.00px;top:808.00px;font-size:17.59px;color:#f2f2f2;transform:scaleX(0.8850);transform-origin:0 0;">0,33</div>
<div class="t" style="left:1409.00px;top:808.00px;font-size:17.59px;color:#f2f2f2;transform:scaleX(0.8850);transform-origin:0 0;">0,33</div>
<div class="t" style="left:1477.00px;top:808.00px;font-size:17.59px;color:#f2f2f2;transform:scaleX(0.8850);transform-origin:0 0;">0,33</div>
<div class="t" style="left:1545.00px;top:808.00px;font-size:17.59px;color:#f2f2f2;transform:scaleX(0.8850);transform-origin:0 0;">0,33</div>
<div class="t" style="left:1613.00px;top:808.00px;font-size:17.59px;color:#f2f2f2;transform:scaleX(0.8850);transform-origin:0 0;">0,33</div>
<div class="t" style="left:1681.00px;top:808.00px;font-size:17.59px;color:#f2f2f2;transform:scaleX(0.8850);transform-origin:0 0;">0,33</div>
<div class="a" style="left:841px;top:828.84px;width:14px;height:28.2px;background:#282828"></div>
<div class="a" style="left:855px;top:828.84px;width:889.4px;height:28.2px;background:#404040"></div>
<div class="t" style="left:858.75px;top:836.00px;font-size:17.59px;color:#f2f2f2;transform:scaleX(0.7256);transform-origin:0 0;">Y</div>
<div class="t" style="left:993.00px;top:836.00px;font-size:17.59px;color:#f2f2f2;transform:scaleX(0.8850);transform-origin:0 0;">0,26</div>
<div class="t" style="left:1070.00px;top:836.00px;font-size:17.59px;color:#f2f2f2;transform:scaleX(0.8850);transform-origin:0 0;">2,13</div>
<div class="t" style="left:1138.00px;top:836.00px;font-size:17.59px;color:#f2f2f2;transform:scaleX(0.8850);transform-origin:0 0;">8,68</div>
<div class="t" style="left:1206.00px;top:836.00px;font-size:17.59px;color:#f2f2f2;transform:scaleX(0.8850);transform-origin:0 0;">20,91</div>
<div class="t" style="left:1274.00px;top:836.00px;font-size:17.59px;color:#f2f2f2;transform:scaleX(0.8850);transform-origin:0 0;">39,48</div>
<div class="t" style="left:1341.00px;top:836.00px;font-size:17.59px;color:#f2f2f2;transform:scaleX(0.8850);transform-origin:0 0;">64,94</div>
<div class="t" style="left:1409.00px;top:836.00px;font-size:17.59px;color:#f2f2f2;transform:scaleX(0.8850);transform-origin:0 0;">96,36</div>
<div class="t" style="left:1477.00px;top:836.00px;font-size:17.59px;color:#f2f2f2;transform:scaleX(0.8850);transform-origin:0 0;">135,01</div>
<div class="t" style="left:1545.00px;top:836.00px;font-size:17.59px;color:#f2f2f2;transform:scaleX(0.8850);transform-origin:0 0;">179,82</div>
<div class="t" style="left:1613.00px;top:836.00px;font-size:17.59px;color:#f2f2f2;transform:scaleX(0.8850);transform-origin:0 0;">234,91</div>
<div class="t" style="left:1681.00px;top:836.00px;font-size:17.59px;color:#f2f2f2;transform:scaleX(0.8850);transform-origin:0 0;">295,58</div>
<div class="a" style="left:841px;top:857.01px;width:14px;height:28.2px;background:#222"></div>
<div class="a" style="left:855px;top:857.01px;width:889.4px;height:28.2px;background:#7f7f7f"></div>
<div class="t" style="left:859.50px;top:865.00px;font-size:17.59px;color:#f2f2f2;transform:scaleX(0.8981);transform-origin:0 0;">Target Y</div>
<div class="t" style="left:993.00px;top:865.00px;font-size:17.59px;color:#f2f2f2;transform:scaleX(0.8850);transform-origin:0 0;">0,00</div>
<div class="t" style="left:1070.00px;top:865.00px;font-size:17.59px;color:#f2f2f2;transform:scaleX(0.8850);transform-origin:0 0;">3,05</div>
<div class="t" style="left:1138.00px;top:865.00px;font-size:17.59px;color:#f2f2f2;transform:scaleX(0.8850);transform-origin:0 0;">9,78</div>
<div class="t" style="left:1206.00px;top:865.00px;font-size:17.59px;color:#f2f2f2;transform:scaleX(0.8850);transform-origin:0 0;">21,36</div>
<div class="t" style="left:1274.00px;top:865.00px;font-size:17.59px;color:#f2f2f2;transform:scaleX(0.8850);transform-origin:0 0;">39,27</div>
<div class="t" style="left:1341.00px;top:865.00px;font-size:17.59px;color:#f2f2f2;transform:scaleX(0.8850);transform-origin:0 0;">63,80</div>
<div class="t" style="left:1409.00px;top:865.00px;font-size:17.59px;color:#f2f2f2;transform:scaleX(0.8850);transform-origin:0 0;">94,15</div>
<div class="t" style="left:1477.00px;top:865.00px;font-size:17.59px;color:#f2f2f2;transform:scaleX(0.8850);transform-origin:0 0;">131,59</div>
<div class="t" style="left:1545.00px;top:865.00px;font-size:17.59px;color:#f2f2f2;transform:scaleX(0.8850);transform-origin:0 0;">178,48</div>
<div class="t" style="left:1613.00px;top:865.00px;font-size:17.59px;color:#f2f2f2;transform:scaleX(0.8850);transform-origin:0 0;">233,89</div>
<div class="t" style="left:1681.00px;top:865.00px;font-size:17.59px;color:#f2f2f2;transform:scaleX(0.8850);transform-origin:0 0;">295,58</div>
<div class="a" style="left:841px;top:885.18px;width:14px;height:28.2px;background:#282828"></div>
<div class="a" style="left:855px;top:885.18px;width:889.4px;height:28.2px;background:#404040"></div>
<div class="t" style="left:858.75px;top:893.00px;font-size:17.59px;color:#f2f2f2;transform:scaleX(0.9460);transform-origin:0 0;">Gamma Log/Log</div>
<div class="t" style="left:993.00px;top:893.00px;font-size:17.59px;color:#f2f2f2;transform:scaleX(0.8850);transform-origin:0 0;">1,37</div>
<div class="t" style="left:1070.00px;top:893.00px;font-size:17.59px;color:#f2f2f2;transform:scaleX(0.8850);transform-origin:0 0;">2,16</div>
<div class="t" style="left:1138.00px;top:893.00px;font-size:17.59px;color:#f2f2f2;transform:scaleX(0.8850);transform-origin:0 0;">2,19</div>
<div class="t" style="left:1206.00px;top:893.00px;font-size:17.59px;color:#f2f2f2;transform:scaleX(0.8850);transform-origin:0 0;">2,19</div>
<div class="t" style="left:1274.00px;top:893.00px;font-size:17.59px;color:#f2f2f2;transform:scaleX(0.8850);transform-origin:0 0;">2,20</div>
<div class="t" style="left:1341.00px;top:893.00px;font-size:17.59px;color:#f2f2f2;transform:scaleX(0.8850);transform-origin:0 0;">2,20</div>
<div class="t" style="left:1409.00px;top:893.00px;font-size:17.59px;color:#f2f2f2;transform:scaleX(0.8850);transform-origin:0 0;">2,19</div>
<div class="t" style="left:1477.00px;top:893.00px;font-size:17.59px;color:#f2f2f2;transform:scaleX(0.8850);transform-origin:0 0;">2,18</div>
<div class="t" style="left:1545.00px;top:893.00px;font-size:17.59px;color:#f2f2f2;transform:scaleX(0.8850);transform-origin:0 0;">2,23</div>
<div class="t" style="left:1613.00px;top:893.00px;font-size:17.59px;color:#f2f2f2;transform:scaleX(0.8850);transform-origin:0 0;">2,23</div>
<div class="t" style="left:1681.00px;top:893.00px;font-size:17.59px;color:#f2f2f2;transform:scaleX(0.8850);transform-origin:0 0;">2,27</div>
<div class="a" style="left:841px;top:913.35px;width:14px;height:28.2px;background:#222"></div>
<div class="a" style="left:855px;top:913.35px;width:889.4px;height:28.2px;background:#7f7f7f"></div>
<div class="t" style="left:859.50px;top:921.00px;font-size:17.59px;color:#f2f2f2;transform:scaleX(0.7701);transform-origin:0 0;">CCT</div>
<div class="t" style="left:993.00px;top:921.00px;font-size:17.59px;color:#f2f2f2;transform:scaleX(0.8850);transform-origin:0 0;">14164,00</div>
<div class="t" style="left:1070.00px;top:921.00px;font-size:17.59px;color:#f2f2f2;transform:scaleX(0.8850);transform-origin:0 0;">6590,00</div>
<div class="t" style="left:1138.00px;top:921.00px;font-size:17.59px;color:#f2f2f2;transform:scaleX(0.8850);transform-origin:0 0;">6340,00</div>
<div class="t" style="left:1206.00px;top:921.00px;font-size:17.59px;color:#f2f2f2;transform:scaleX(0.8850);transform-origin:0 0;">6522,00</div>
<div class="t" style="left:1274.00px;top:921.00px;font-size:17.59px;color:#f2f2f2;transform:scaleX(0.8850);transform-origin:0 0;">6474,00</div>
<div class="t" style="left:1341.00px;top:921.00px;font-size:17.59px;color:#f2f2f2;transform:scaleX(0.8850);transform-origin:0 0;">6474,00</div>
<div class="t" style="left:1409.00px;top:921.00px;font-size:17.59px;color:#f2f2f2;transform:scaleX(0.8850);transform-origin:0 0;">6483,00</div>
<div class="t" style="left:1477.00px;top:921.00px;font-size:17.59px;color:#f2f2f2;transform:scaleX(0.8850);transform-origin:0 0;">6483,00</div>
<div class="t" style="left:1545.00px;top:921.00px;font-size:17.59px;color:#f2f2f2;transform:scaleX(0.8850);transform-origin:0 0;">6505,00</div>
<div class="t" style="left:1613.00px;top:921.00px;font-size:17.59px;color:#f2f2f2;transform:scaleX(0.8850);transform-origin:0 0;">6514,00</div>
<div class="t" style="left:1681.00px;top:921.00px;font-size:17.59px;color:#f2f2f2;transform:scaleX(0.8850);transform-origin:0 0;">6518,00</div>
<div class="a" style="left:841px;top:941.52px;width:14px;height:28.2px;background:#282828"></div>
<div class="a" style="left:855px;top:941.52px;width:889.4px;height:28.2px;background:#404040"></div>
<div class="t" style="left:858.75px;top:949.00px;font-size:17.59px;color:#f2f2f2;transform:scaleX(0.8862);transform-origin:0 0;">ΔE 2000</div>
<div class="t" style="left:993.00px;top:949.00px;font-size:17.59px;color:#f2f2f2;transform:scaleX(0.8850);transform-origin:0 0;">0,95</div>
<div class="t" style="left:1070.00px;top:949.00px;font-size:17.59px;color:#f2f2f2;transform:scaleX(0.8850);transform-origin:0 0;">1,71</div>
<div class="t" style="left:1138.00px;top:949.00px;font-size:17.59px;color:#f2f2f2;transform:scaleX(0.8850);transform-origin:0 0;">1,26</div>
<div class="t" style="left:1206.00px;top:949.00px;font-size:17.59px;color:#f2f2f2;transform:scaleX(0.8850);transform-origin:0 0;">0,92</div>
<div class="t" style="left:1274.00px;top:949.00px;font-size:17.59px;color:#f2f2f2;transform:scaleX(0.8850);transform-origin:0 0;">0,30</div>
<div class="t" style="left:1341.00px;top:949.00px;font-size:17.59px;color:#f2f2f2;transform:scaleX(0.8850);transform-origin:0 0;">0,58</div>
<div class="t" style="left:1409.00px;top:949.00px;font-size:17.59px;color:#f2f2f2;transform:scaleX(0.8850);transform-origin:0 0;">0,71</div>
<div class="t" style="left:1477.00px;top:949.00px;font-size:17.59px;color:#f2f2f2;transform:scaleX(0.8850);transform-origin:0 0;">0,72</div>
<div class="t" style="left:1545.00px;top:949.00px;font-size:17.59px;color:#f2f2f2;transform:scaleX(0.8850);transform-origin:0 0;">1,22</div>
<div class="t" style="left:1613.00px;top:949.00px;font-size:17.59px;color:#f2f2f2;transform:scaleX(0.8850);transform-origin:0 0;">0,47</div>
<div class="t" style="left:1681.00px;top:949.00px;font-size:17.59px;color:#f2f2f2;transform:scaleX(0.8850);transform-origin:0 0;">0,39</div>
<div class="a" style="left:200.90px;top:977.8px;width:125px;height:61.3px;background:linear-gradient(#aaa,#8a8a8a 45%,#6a6a6a 75%,#5e5e5e);border-radius:4px"></div>
<div class="a" style="left:205.90px;top:982.9px;width:115px;height:36px;background:#000000;border-radius:3px;box-shadow:inset 0 1px 2px rgba(0,0,0,.35);"></div>
<div class="t" style="left:260.56px;top:1024.00px;font-size:11.77px;color:#2e2e2e;font-weight:bold;transform:scaleX(0.8600);transform-origin:0 0;">0</div>
<div class="a" style="left:327.73px;top:977.8px;width:125px;height:61.3px;background:linear-gradient(#aaa,#8a8a8a 45%,#6a6a6a 75%,#5e5e5e);border-radius:4px"></div>
<div class="a" style="left:332.73px;top:982.9px;width:115px;height:36px;background:#1c1c1c;border-radius:3px;box-shadow:inset 0 1px 2px rgba(0,0,0,.35);"></div>
<div class="t" style="left:384.61px;top:1024.00px;font-size:11.77px;color:#2e2e2e;font-weight:bold;transform:scaleX(0.8600);transform-origin:0 0;">10</div>
<div class="a" style="left:454.56px;top:977.8px;width:125px;height:61.3px;background:linear-gradient(#aaa,#8a8a8a 45%,#6a6a6a 75%,#5e5e5e);border-radius:4px"></div>
<div class="a" style="left:459.56px;top:982.9px;width:115px;height:36px;background:#333333;border-radius:3px;box-shadow:inset 0 1px 2px rgba(0,0,0,.35);"></div>
<div class="t" style="left:511.44px;top:1024.00px;font-size:11.77px;color:#2e2e2e;font-weight:bold;transform:scaleX(0.8600);transform-origin:0 0;">20</div>
<div class="a" style="left:581.39px;top:977.8px;width:125px;height:61.3px;background:linear-gradient(#aaa,#8a8a8a 45%,#6a6a6a 75%,#5e5e5e);border-radius:4px"></div>
<div class="a" style="left:586.39px;top:982.9px;width:115px;height:36px;background:#4d4d4d;border-radius:3px;box-shadow:inset 0 1px 2px rgba(0,0,0,.35);"></div>
<div class="t" style="left:638.27px;top:1024.00px;font-size:11.77px;color:#2e2e2e;font-weight:bold;transform:scaleX(0.8600);transform-origin:0 0;">30</div>
<div class="a" style="left:708.22px;top:977.8px;width:125px;height:61.3px;background:linear-gradient(#aaa,#8a8a8a 45%,#6a6a6a 75%,#5e5e5e);border-radius:4px"></div>
<div class="a" style="left:713.22px;top:982.9px;width:115px;height:36px;background:#666666;border-radius:3px;box-shadow:inset 0 1px 2px rgba(0,0,0,.35);"></div>
<div class="t" style="left:765.10px;top:1024.00px;font-size:11.77px;color:#2e2e2e;font-weight:bold;transform:scaleX(0.8600);transform-origin:0 0;">40</div>
<div class="a" style="left:835.05px;top:977.8px;width:125px;height:61.3px;background:linear-gradient(#aaa,#8a8a8a 45%,#6a6a6a 75%,#5e5e5e);border-radius:4px"></div>
<div class="a" style="left:840.05px;top:982.9px;width:115px;height:36px;background:#808080;border-radius:3px;box-shadow:inset 0 1px 2px rgba(0,0,0,.35);"></div>
<div class="t" style="left:891.93px;top:1024.00px;font-size:11.77px;color:#2e2e2e;font-weight:bold;transform:scaleX(0.8600);transform-origin:0 0;">50</div>
<div class="a" style="left:961.88px;top:977.8px;width:125px;height:61.3px;background:linear-gradient(#aaa,#8a8a8a 45%,#6a6a6a 75%,#5e5e5e);border-radius:4px"></div>
<div class="a" style="left:966.88px;top:982.9px;width:115px;height:36px;background:#999999;border-radius:3px;box-shadow:inset 0 1px 2px rgba(0,0,0,.35);"></div>
<div class="t" style="left:1018.76px;top:1024.00px;font-size:11.77px;color:#2e2e2e;font-weight:bold;transform:scaleX(0.8600);transform-origin:0 0;">60</div>
<div class="a" style="left:1088.71px;top:977.8px;width:125px;height:61.3px;background:linear-gradient(#aaa,#8a8a8a 45%,#6a6a6a 75%,#5e5e5e);border-radius:4px"></div>
<div class="a" style="left:1093.71px;top:982.9px;width:115px;height:36px;background:#b3b3b3;border-radius:3px;box-shadow:inset 0 1px 2px rgba(0,0,0,.35);"></div>
<div class="t" style="left:1145.59px;top:1024.00px;font-size:11.77px;color:#2e2e2e;font-weight:bold;transform:scaleX(0.8600);transform-origin:0 0;">70</div>
<div class="a" style="left:1215.54px;top:977.8px;width:125px;height:61.3px;background:linear-gradient(#aaa,#8a8a8a 45%,#6a6a6a 75%,#5e5e5e);border-radius:4px"></div>
<div class="a" style="left:1220.54px;top:982.9px;width:115px;height:36px;background:#cccccc;border-radius:3px;box-shadow:inset 0 1px 2px rgba(0,0,0,.35);"></div>
<div class="t" style="left:1272.42px;top:1024.00px;font-size:11.77px;color:#2e2e2e;font-weight:bold;transform:scaleX(0.8600);transform-origin:0 0;">80</div>
<div class="a" style="left:1342.37px;top:977.8px;width:125px;height:61.3px;background:linear-gradient(#aaa,#8a8a8a 45%,#6a6a6a 75%,#5e5e5e);border-radius:4px"></div>
<div class="a" style="left:1347.37px;top:982.9px;width:115px;height:36px;background:#e6e6e6;border-radius:3px;box-shadow:inset 0 1px 2px rgba(0,0,0,.35);"></div>
<div class="t" style="left:1399.25px;top:1024.00px;font-size:11.77px;color:#2e2e2e;font-weight:bold;transform:scaleX(0.8600);transform-origin:0 0;">90</div>
<div class="a" style="left:1469.20px;top:977.8px;width:125px;height:61.3px;background:#2a2a2a;border-radius:4px"></div>
<div class="a" style="left:1474.20px;top:982.9px;width:115px;height:36px;background:#ffffff;border-radius:3px;"></div>
<div class="t" style="left:1522.54px;top:1025.00px;font-size:11.92px;color:#fff;font-weight:bold;transform:scaleX(0.9200);transform-origin:0 0;">100</div>
<div class="a" style="left:1597.2px;top:978px;width:47.8px;height:18.4px;background:linear-gradient(#b4b4b4,#8c8c8c 50%,#6e6e6e);border-radius:4px 4px 0 0"></div>
<div class="a" style="left:1597.2px;top:997.4px;width:47.8px;height:40.8px;background:linear-gradient(#9a9a9a,#7a7a7a 60%,#6a6a6a);border-radius:0 0 4px 4px"></div>
<div class="a" style="left:1614.0px;top:979.3px;width:15.0px;height:15.0px;border-radius:50%;background:linear-gradient(#777,#a8a8a8)"></div>
<svg class="a" style="left:1615px;top:982px" width="13" height="8"><path d="M1 6.5H12L6.5 1z" fill="#333"/></svg>
<div class="a" style="left:1605.1px;top:1002px;width:31.6px;height:31px;border:2.5px solid #2e2e2e;border-radius:5px;background:linear-gradient(#aaa,#888)"></div>
<div class="a" style="left:1614px;top:1010.7px;width:14.2px;height:14.3px;background:#000"></div>
<div class="a" style="left:1647.0px;top:978px;width:44.7px;height:30.1px;background:linear-gradient(#b4b4b4,#8c8c8c 50%,#6e6e6e);border-radius:4px 0 0 0"></div>
<div class="a" style="left:1692.9px;top:978px;width:43.8px;height:30.1px;background:linear-gradient(#b4b4b4,#8c8c8c 50%,#6e6e6e);border-radius:0"></div>
<div class="a" style="left:1737.9px;top:978px;width:44.0px;height:30.1px;background:linear-gradient(#b4b4b4,#8c8c8c 50%,#6e6e6e);border-radius:0"></div>
<div class="a" style="left:1783.1px;top:978px;width:43.8px;height:30.1px;background:linear-gradient(#b4b4b4,#8c8c8c 50%,#6e6e6e);border-radius:0"></div>
<div class="a" style="left:1828.1px;top:978px;width:43.7px;height:30.1px;background:linear-gradient(#b4b4b4,#8c8c8c 50%,#6e6e6e);border-radius:0"></div>
<div class="a" style="left:1873.0px;top:978px;width:45.0px;height:30.1px;background:linear-gradient(#b4b4b4,#8c8c8c 50%,#6e6e6e);border-radius:0 4px 0 0"></div>
<div class="a" style="left:1658.7px;top:983.0px;width:20px;height:20px;border-radius:50%;background:linear-gradient(#777,#a8a8a8)"></div>
<div class="a" style="left:1705.0px;top:983.0px;width:20px;height:20px;border-radius:50%;background:linear-gradient(#777,#a8a8a8)"></div>
<div class="a" style="left:1749.8px;top:983.0px;width:20px;height:20px;border-radius:50%;background:linear-gradient(#777,#a8a8a8)"></div>
<div class="a" style="left:1794.8px;top:983.0px;width:20px;height:20px;border-radius:50%;background:linear-gradient(#777,#a8a8a8)"></div>
<div class="a" style="left:1839.9px;top:983.0px;width:20px;height:20px;border-radius:50%;background:linear-gradient(#777,#a8a8a8)"></div>
<div class="a" style="left:1886.0px;top:983.0px;width:20px;height:20px;border-radius:50%;background:linear-gradient(#777,#a8a8a8)"></div>
<svg class="a" style="left:0;top:0" width="1920" height="1080">
<rect x="1664.2" y="988.5" width="9" height="9" fill="#333"/>
<path d="M1711.5 987.5V998.5L1720.5 993z" fill="#333"/>
<path d="M1754.5 987.5h-2v11h2M1765 987.5h2v11h-2" fill="none" stroke="#333" stroke-width="1.8"/>
<circle cx="1757.5" cy="993" r="1" fill="#333"/><circle cx="1761.5" cy="993" r="1" fill="#333"/>
<path d="M1804.8 993c-2-2.5-6-2.5-6 0s4 2.5 6 0s6-2.5 6 0s-4 2.5-6 0z" fill="none" stroke="#333" stroke-width="1.8"/>
<path d="M1845 991.5a5.5 5.5 0 0 1 9.5-2M1855 994.5a5.5 5.5 0 0 1-9.5 2" fill="none" stroke="#333" stroke-width="2"/>
<path d="M1855.5 986.5v4h-4z M1844.5 999.5v-4h4z" fill="#333"/>
</svg>
<div class="a" style="left:1647px;top:1009px;width:134.6px;height:29.2px;background:linear-gradient(#b4b4b4,#8c8c8c 50%,#6e6e6e);border-radius:0 0 0 4px"></div>
<div class="a" style="left:1782.8px;top:1009px;width:135.8px;height:29.2px;background:linear-gradient(#b4b4b4,#8c8c8c 50%,#6e6e6e);border-radius:0 0 4px 0"></div>
<div class="a" style="left:1666.8px;top:1013.6px;width:20px;height:20px;border-radius:50%;background:linear-gradient(#777,#a8a8a8)"></div>
<div class="a" style="left:1879.9px;top:1013.6px;width:20px;height:20px;border-radius:50%;background:linear-gradient(#777,#a8a8a8)"></div>
<svg class="a" style="left:0;top:0" width="1920" height="1080"><path d="M1676 1019l-4.5 4.6 4.5 4.6M1681 1019l-4.5 4.6 4.5 4.6" fill="none" stroke="#333" stroke-width="1.8"/><path d="M1885.5 1019l4.5 4.6-4.5 4.6M1890.5 1019l4.5 4.6-4.5 4.6" fill="none" stroke="#333" stroke-width="1.8"/></svg>
<div class="t" style="left:1703.80px;top:1014.00px;font-size:22.53px;color:#333;font-weight:bold;transform:scaleX(0.9342);transform-origin:0 0;">Back</div>
<div class="t" style="left:1810.50px;top:1014.00px;font-size:22.53px;color:#333;font-weight:bold;transform:scaleX(1.0514);transform-origin:0 0;">Next</div>
<div class="a" style="left:0;top:1040px;width:1920px;height:40px;background:#05070c"></div>
<svg class="a" style="left:15.75px;top:1052px" width="17" height="16"><path d="M0 2.3L6.9 1.3V7.6H0z M7.8 1.2L16.3 0V7.6H7.8z M0 8.5H6.9V14.8L0 13.8z M7.8 8.5H16.3V16L7.8 14.8z" fill="#fff"/></svg>
<div class="a" style="left:48px;top:1040px;width:344px;height:40px;background:#333"></div>
<div class="a" style="left:57px;top:1049.5px;width:21px;height:21px;border-radius:50%;border:2.6px solid #f2f2f2"></div>
<div class="t" style="left:88.00px;top:1054.00px;font-size:15.70px;color:#a8a8a8;transform:scaleX(0.9247);transform-origin:0 0;">Ich bin Cortana. Frag mich etwas.</div>
<svg class="a" style="left:0;top:0" width="1920" height="1080"><rect x="409.5" y="1053.5" width="13" height="13" fill="none" stroke="#fff" stroke-width="1.4"/><path d="M407 1055.5h-1.5v9h1.5M425 1055.5h1.5v9h-1.5" fill="none" stroke="#fff" stroke-width="1.2"/></svg>
<svg class="a" style="left:455px;top:1050px" width="22" height="21" viewBox="0 0 22 21"><path d="M11.5 0.5C4.5 0.5 0.3 5.5 0.5 11.5C1 17 6 20.5 11.5 20.5C15 20.5 18 19.5 20.5 17.5V12.5C18.5 15 15.5 16 13 16C9.5 16 7.2 14 7 11.5H21.5V9.5C21.5 4 17.5 0.5 11.5 0.5zM7.2 8.2C7.8 6 9.5 4.8 11.6 4.8C14 4.8 15.4 6.2 15.5 8.2z" fill="#1e88e5"/></svg>
<svg class="a" style="left:504px;top:1051px" width="22" height="19"><path d="M0.5 1.5h7l2 2h12v14.5h-21z" fill="#e8b845"/><rect x="0.5" y="5" width="21" height="13" fill="#f7d675"/><path d="M5 12h12v6.5h-3v-3.5h-6v3.5h-3z" fill="#2196e8"/></svg>
<svg class="a" style="left:553px;top:1049px" width="21" height="23"><path d="M6.5 6V3.5a4 3 0 0 1 8 0V6" fill="none" stroke="#fff" stroke-width="1.3"/><path d="M1 6h19v16.5H1z" fill="#fff"/><path d="M6 10.5h3.8v3.8H6zM10.8 10.5h3.8v3.8h-3.8zM6 15.3h3.8v3.8H6zM10.8 15.3h3.8v3.8h-3.8z" fill="#05070c"/></svg>
<svg class="a" style="left:602px;top:1052px" width="21" height="17"><rect x="0" y="0.5" width="21" height="16" fill="#7cc6f2"/><rect x="1.5" y="2" width="18" height="13" fill="#3aa0e0"/><circle cx="6.5" cy="7" r="3.5" fill="#fff"/><path d="M6.5 7V3.5A3.5 3.5 0 0 1 10 7z" fill="#f5a623"/><rect x="12" y="4" width="6" height="1.5" fill="#fff"/><rect x="12" y="7" width="6" height="1.5" fill="#fff"/><rect x="3" y="12" width="14" height="1.3" fill="#f5d05a"/></svg>
<svg class="a" style="left:650px;top:1049px" width="24" height="24"><ellipse cx="10" cy="14" rx="9.5" ry="7.5" fill="#c8dcec"/><circle cx="6" cy="12" r="2" fill="#e34"/><circle cx="9" cy="9.5" r="1.8" fill="#4c4"/><circle cx="13" cy="9.5" r="1.8" fill="#fc3"/><circle cx="5.5" cy="16" r="1.6" fill="#36c"/><path d="M22.5 1.5L12 17.5l1.5 1L23.5 2.5z" fill="#d2882a"/></svg>
<div class="a" style="left:687px;top:1040px;width:47.5px;height:40px;background:#2c2e33"></div>
<svg class="a" style="left:700px;top:1049px" width="22" height="22"><path d="M3 1.5L21 11.5L7 20.5z" fill="#0a7a12"/><path d="M6 5L17 11.5L8 17z" fill="#1ec82a"/></svg>
<div class="t" style="left:707.00px;top:1056.00px;font-size:11.63px;color:#111;font-weight:bold;">5</div>
<div class="a" style="left:495px;top:1078px;width:40px;height:2px;background:#76b9ed"></div>
<div class="a" style="left:593px;top:1078px;width:40px;height:2px;background:#76b9ed"></div>
<div class="a" style="left:642px;top:1078px;width:40px;height:2px;background:#76b9ed"></div>
<div class="a" style="left:687px;top:1078px;width:47.5px;height:2px;background:#76b9ed"></div>
<svg class="a" style="left:0;top:0" width="1920" height="1080"><path d="M1726 1063l5.8-5.8 5.8 5.8" fill="none" stroke="#fff" stroke-width="1.2"/><rect x="1750.5" y="1056.5" width="12" height="7" fill="none" stroke="#fff" stroke-width="1.2"/><rect x="1752" y="1058" width="9" height="4" fill="#fff"/><rect x="1762.5" y="1058.5" width="1.3" height="3" fill="#fff"/><path d="M1748 1055.5v4h3v-4M1749.5 1059.5v5" fill="none" stroke="#fff" stroke-width="1.2"/><path d="M1775 1067a10 10 0 0 1 10-10M1778 1067a7 7 0 0 1 7-7M1781 1067a4 4 0 0 1 4-4" fill="none" stroke="#fff" stroke-width="1.2"/><rect x="1784" y="1064.5" width="3" height="3" fill="#fff"/><path d="M1796.5 1057.5h3l4-3.5v12l-4-3.5h-3z" fill="none" stroke="#fff" stroke-width="1.1"/><circle cx="1807.5" cy="1063.5" r="4.6" fill="#e0242c"/><path d="M1805.3 1061.3l4.4 4.4M1809.7 1061.3l-4.4 4.4" stroke="#fff" stroke-width="1.2"/><path d="M1820 1052h16v13h-6l-2 3-2-3h-6z" fill="#fff"/><path d="M1823 1055.5h10M1823 1058.5h10M1823 1061.5h6" stroke="#05070c" stroke-width="1.2"/></svg>
<div class="t" style="left:1864.75px;top:1045.00px;font-size:12.35px;color:#fff;transform:scaleX(0.8369);transform-origin:0 0;">15:43</div>
<div class="t" style="left:1850.00px;top:1062.00px;font-size:12.35px;color:#fff;transform:scaleX(0.8825);transform-origin:0 0;">20.11.2015</div>
<div class="a" style="left:1915px;top:1040px;width:1px;height:40px;background:#555"></div>
</body></html>
